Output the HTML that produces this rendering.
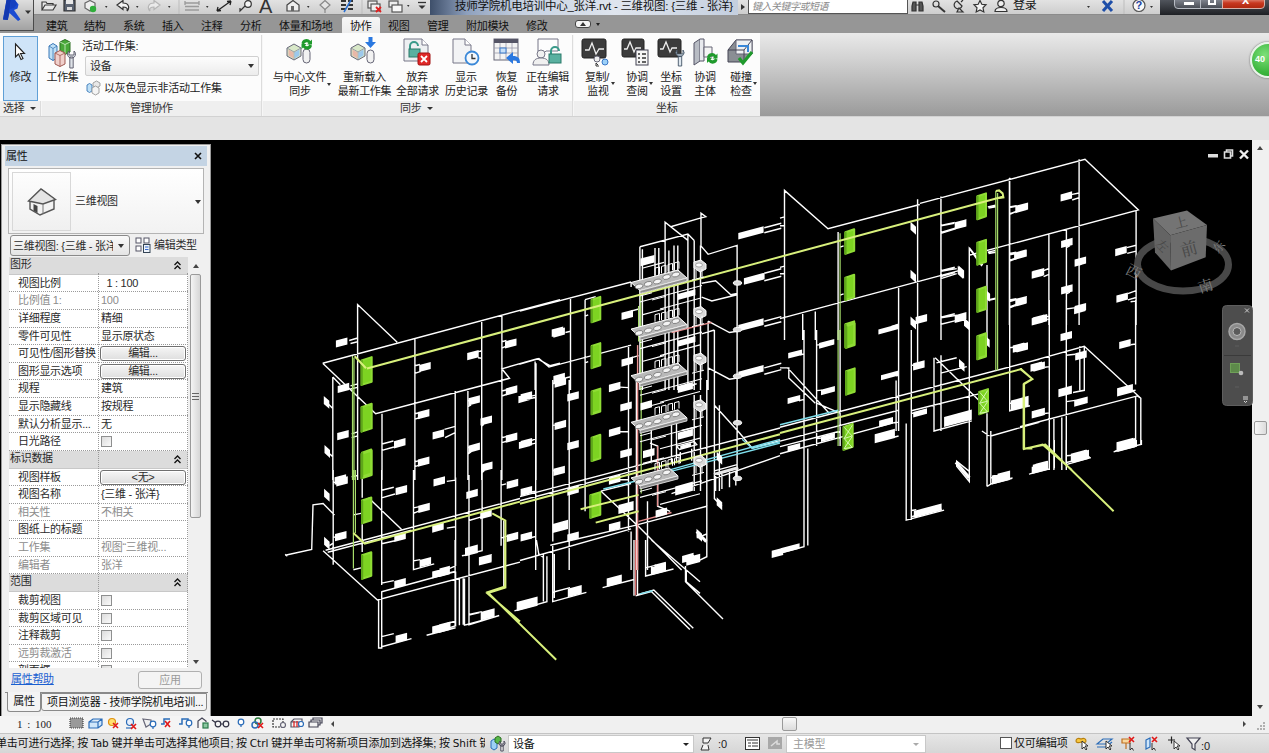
<!DOCTYPE html>
<html><head><meta charset="utf-8"><title>Revit</title>
<style>
*{box-sizing:border-box;margin:0;padding:0}
html,body{width:1269px;height:753px;overflow:hidden;background:#e9e9e9}
body{font-family:"Liberation Sans","Noto Sans CJK SC",sans-serif;font-size:12px;color:#2a2a2a;position:relative}
.abs{position:absolute}
svg{position:absolute;overflow:visible}
#qat{left:0;top:0;width:1269px;height:15px;background:linear-gradient(#e2e2e2,#cdcdcd);border-bottom:1px solid #8b8b8b}
#tabs{left:0;top:15px;width:1269px;height:18px;background:#969696;}
#tabs2 span{position:absolute;top:2px;font-size:11px;color:#111;white-space:nowrap;line-height:18px;letter-spacing:-0.3px}
#rbtn{left:0;top:0;width:34px;height:31px;background:linear-gradient(#dedede,#bdbdbd 55%,#a2a2a2);border-right:1px solid #4a4a4a;border-bottom:1px solid #4a4a4a}
#ribbon{left:0;top:33px;width:1269px;height:83px;background:linear-gradient(#e9e9e9,#cfcfcf 35%,#9a9a9a);}
#ribpan{left:0;top:33px;width:760px;height:83px;background:#fcfcfc}
#ribtitle{left:0;top:101px;width:760px;height:15px;background:#efefef}
.rt{position:absolute;top:101px;font-size:11px;line-height:15px;color:#333;white-space:nowrap;letter-spacing:-0.3px}
.rl{position:absolute;font-size:11px;line-height:14px;color:#222;white-space:nowrap;text-align:center;letter-spacing:-0.3px;transform:translateX(-50%)}
.sep{position:absolute;top:35px;width:2px;height:81px;background:#dcdcdc;border-right:1px solid #f6f6f6}
.dar{position:absolute;width:0;height:0;border:3px solid transparent;border-top:3px solid #333;border-bottom:0}
#optbar{left:0;top:116px;width:1269px;height:24px;background:#e4e4e4;border-top:1px solid #d2d2d2}
#view{left:0;top:140px;width:1252px;height:576px;background:#000}
#vscroll{left:1252px;top:140px;width:17px;height:576px;background:#f0f0f0}
#hscroll{left:0;top:716px;width:1269px;height:17px;background:#f0f0f0}
#status{left:0;top:733px;width:1269px;height:20px;background:#f0f0f0;border-top:1px solid #dcdcdc}
#props{left:1px;top:144px;width:210px;height:572px;background:#f0f0f0;border:1px solid #9a9a9a;border-bottom:0}
.pr{position:absolute;left:7px;width:179px;height:18px;border-bottom:1px dotted #9a9a9a;background:#fff;font-size:11px;line-height:16px;white-space:nowrap;letter-spacing:-0.3px;overflow:hidden}
.pr b{position:absolute;left:9px;top:0;font-weight:normal}
.pr i{position:absolute;left:92px;top:0;font-style:normal}
.pr.g{color:#8c8c8c}
.ph{position:absolute;left:7px;width:179px;height:18px;background:#dcdcdc;font-size:11px;line-height:15px;padding-left:1px;letter-spacing:-0.3px;border-bottom:1px solid #c8c8c8}
.ph:after{content:"\2303\2303";position:absolute;right:8px;top:0;font-size:0}
.chev{position:absolute;right:7px;top:4px;width:7px;height:9px}
.pbtn{position:absolute;left:91px;top:1px;width:86px;height:15px;border:1px solid #707070;border-radius:3px;background:linear-gradient(#f6f6f6,#dedede);text-align:center;line-height:13px;font-size:11px;box-shadow:inset 0 0 0 1px #fff}
.cb{position:absolute;left:92px;top:3px;width:11px;height:11px;border:1px solid #8e8f8f;background:linear-gradient(135deg,#dcdcdc,#fafafa)}
#sttxt em{font-style:normal;font-family:"DejaVu Sans",sans-serif;font-size:10.5px;letter-spacing:0}
</style></head><body>
<div id="qat" class="abs"></div>
<div id="tabs" class="abs"></div>
<div class="abs" style="left:342px;top:17px;width:38px;height:16px;background:linear-gradient(#f6f6f6,#ececec);border-radius:2px 2px 0 0"></div>
<div id="tabs2" class="abs" style="left:0;top:15px;width:700px;height:18px">
<span style="left:46px">建筑</span><span style="left:84px">结构</span><span style="left:123px">系统</span><span style="left:162px">插入</span><span style="left:201px">注释</span><span style="left:240px">分析</span><span style="left:279px">体量和场地</span><span style="left:350px">协作</span><span style="left:388px">视图</span><span style="left:427px">管理</span><span style="left:466px">附加模块</span><span style="left:526px">修改</span></div>
<div class="abs" style="left:575px;top:20px;width:16px;height:8px;background:#f4f4f4;border:1px solid #444;border-radius:3px"></div><div class="abs" style="left:580px;top:22px;border:3px solid transparent;border-bottom:4px solid #333;border-top:0"></div><div class="abs" style="left:596px;top:23px;border:2.5px solid transparent;border-top:3px solid #222;border-bottom:0"></div>
<div id="rbtn" class="abs"></div>
<svg style="left:0;top:0" width="34" height="31" viewBox="0 0 34 31"><path d="M6.500 0 L15 0 L18.500 4.500 L17.500 8.500 L14 10 L20.500 19.500 L18 21 L9.500 13 L7.800 20 L3 19.500 Z" fill="#1a4bd2"/><path d="M6.500 0 L11 0 L7.800 20 L3 19.500 Z" fill="#1238b0"/><path d="M11 0 L15 0 L17 4 L14 8 L10 9 Z" fill="#1440c0"/><path d="M25 10.500 L31 10.500 L28 14 Z" fill="#333"/></svg>
<!-- QAT icons -->
<svg style="left:36px;top:0" width="400" height="15" viewBox="36 0 400 15" fill="none" stroke="#3a3a3a" stroke-width="1.2">
<path d="M42 10 L42 2 L46 2 L47 3.5 L53 3.5 L53 5 M42 10 L45 5 L56 5 L53 10 Z" fill="#e8e8e8"/>
<path d="M64 0 H75 V11 H64 Z" fill="#5a6270" stroke="#333"/><rect x="66" y="0" width="7" height="4" fill="#e8e8e8" stroke="none"/><rect x="67" y="7" width="5" height="3" fill="#ddd" stroke="none"/>
<path d="M85 3 L90 0.5 L95 3 L95 8 L90 11 L85 8 Z" fill="#eee" stroke="#666"/><circle cx="93" cy="9" r="3.2" fill="#2fae3a" stroke="none"/>
<path d="M105 6 l2.5 0 l-1.25 2 z" fill="#333" stroke="none"/>
<path d="M117 5 L123 0.5 V3 C129 3 130 8 127 11 C128 8 126 7 123 7 V9.5 Z" fill="#f4f4f4" stroke="#333"/>
<path d="M136 6 l2.5 0 l-1.25 2 z" fill="#333" stroke="none"/>
<path d="M160 5 L154 0.5 V3 C148 3 147 8 150 11 C149 8 151 7 154 7 V9.5 Z" fill="#eaeaea" stroke="#b5b5b5"/>
<path d="M168 6 l2.5 0 l-1.25 2 z" fill="#333" stroke="none"/>
<path d="M179 0 V14" stroke="#bdbdbd" stroke-width="1"/>
<path d="M185 3 H199 M185 6.5 H199 M185 10 H199 M185 1 V5 M199 1 V5" stroke="#9a9a9a" stroke-width="1.3"/>
<path d="M206 6 l2.5 0 l-1.25 2 z" fill="#333" stroke="none"/>
<path d="M217 11 L231 1 M217 11 l1 -4 M217 11 l4 -0.5 M231 1 l-4 0.5 M231 1 l-1 4" stroke="#222" stroke-width="1.3"/>
<circle cx="248" cy="4" r="3.3" fill="#f4f4f4" stroke="#333"/><path d="M245 6 L240 11 V8" stroke="#333"/>
<path d="M176 0" />
</svg>
<div class="abs" style="left:259px;top:-4px;font-size:20px;line-height:20px;color:#333;font-family:'Liberation Sans',sans-serif">A</div>
<svg style="left:280px;top:0" width="160" height="15" viewBox="280 0 160 15" fill="none" stroke="#3a3a3a" stroke-width="1.2">
<path d="M287 5 L293 0.5 L299 5 V11 H287 Z" fill="#eee" stroke="#444"/><rect x="291" y="6" width="3" height="5" fill="#666" stroke="none"/>
<path d="M307 6 l2.5 0 l-1.25 2 z" fill="#333" stroke="none"/>
<path d="M320 5 l5 -4.5 l5 4.5 l-5 4.5 z" fill="#e4e4e4" stroke="#888"/><path d="M325 9 V13" stroke="#888"/>
<path d="M341 1 H355 M341 5 H355 M341 9 H355" stroke="#333" stroke-width="2.2" stroke-dasharray="5 2"/><path d="M344 12 L351 0" stroke="#2a6fd0" stroke-width="1.5"/>
<path d="M362 0 V14" stroke="#bdbdbd" stroke-width="1"/>
<rect x="368" y="1" width="9" height="7" fill="#eee" stroke="#555"/><rect x="371" y="4" width="9" height="7" fill="#eee" stroke="#555"/><path d="M376 7 l5 5 M381 7 l-5 5" stroke="#e02020" stroke-width="1.8"/>
<rect x="389" y="1" width="9" height="6" fill="#eee" stroke="#555"/><rect x="392" y="5" width="10" height="7" fill="#f8f8f8" stroke="#555"/>
<path d="M407 5 l2.5 0 l-1.25 2 z" fill="#333" stroke="none"/>
<path d="M418 2.5 H426" stroke="#333" stroke-width="1.3"/><path d="M418.5 5.5 l7 0 l-3.5 3.5 z" fill="#333" stroke="none"/>
</svg>
<!-- title -->
<div class="abs" style="left:430px;top:0;width:308px;height:15px;background:linear-gradient(90deg,#3e4f6a,#8ea0bd 12%,#c7d2e2 30%,#dfe5ee 60%,#c4cfdf);overflow:hidden"><div style="position:absolute;left:25px;top:-3px;font-size:11.5px;line-height:18px;white-space:nowrap;color:#111;letter-spacing:-0.26px" id="ttl">技师学院机电培训中心_张洋.rvt - 三维视图: {三维 - 张洋}</div></div>
<div class="abs" style="left:741px;top:4px;border:3.5px solid transparent;border-left:4px solid #333;border-right:0"></div>
<div class="abs" style="left:748px;top:-1px;width:160px;height:15px;background:#fff;border:1px solid #555"><div style="position:absolute;left:3px;top:-1px;font-size:10px;line-height:15px;font-style:italic;color:#8a8a8a;white-space:nowrap;letter-spacing:-0.5px">键入关键字或短语</div></div>
<svg style="left:908px;top:0" width="250" height="15" viewBox="908 0 250 15" fill="none" stroke="#333" stroke-width="1.2">
<path d="M913 2 h3 v9 h-4 v-5 z M919 2 h3 l1 4 v5 h-4 z M916 5 h3" fill="#555"/>
<circle cx="936" cy="4" r="3" /><path d="M938 6 L945 12" stroke-width="2"/>
<path d="M957 1 a4 4 0 1 0 5 5 z M959 8 l-2 4 h6 z M961 2 l2 -2" />
<path d="M980 0.5 l1.8 3.8 l4.2 0.5 l-3 3 l0.8 4.2 l-3.800 -2 l-3.8 2 l0.8 -4.200 l-3 -3 l4.200 -0.500 z" fill="#f4f4f4"/>
<circle cx="1001" cy="3.500" r="3.200" fill="#eee"/><path d="M995 11.500 c0 -3 3 -4 6 -4 c3 0 6 1 6 4 z" fill="#eee"/>
<path d="M1087 6 l3 0 l-1.500 2 z" fill="#333" stroke="none"/>
<path d="M1103 1 l9 10 M1112 1 l-9 10" stroke="#1e4ea8" stroke-width="3"/>
<path d="M1124 0 V14" stroke="#bdbdbd" stroke-width="1"/>
<circle cx="1139" cy="5.500" r="6" fill="#f8f8f8" stroke="#555"/>
<path d="M1150 6 l3 0 l-1.500 2 z" fill="#333" stroke="none"/>
</svg>
<div class="abs" style="left:1135.500px;top:-1px;font-size:11px;font-weight:bold;color:#1a3fa0;line-height:13px">?</div>
<div class="abs" style="left:1013px;top:-3px;font-size:12px;line-height:17px;color:#111;letter-spacing:-0.3px">登录</div>
<div class="abs" style="left:1160px;top:0;width:109px;height:15px;background:linear-gradient(#50545c,#1e2024)"></div>
<div class="abs" style="left:1174px;top:-3px;width:27px;height:12px;border:1px solid #b8bcc4;border-radius:0 0 0 4px;background:linear-gradient(#8a8f99,#4a4e56)"></div>
<div class="abs" style="left:1200px;top:-3px;width:23px;height:12px;border:1px solid #b8bcc4;background:linear-gradient(#8a8f99,#4a4e56)"></div>
<div class="abs" style="left:1222px;top:-3px;width:43px;height:12px;border:1px solid #d8b0a8;border-radius:0 0 4px 0;background:linear-gradient(#e8a090,#c83820 50%,#b02810)"></div>
<div class="abs" style="left:1184px;top:2px;width:10px;height:3px;background:#fff"></div>
<div class="abs" style="left:1208px;top:0;width:8px;height:5px;border:2px solid #fff;border-top:0"></div>
<div class="abs" style="left:1242px;top:-7px;font-size:13px;font-weight:bold;color:#fff;line-height:14px;font-family:'Liberation Sans',sans-serif">x</div>
<div id="ribbon" class="abs"></div>
<div id="ribpan" class="abs"></div>
<div id="ribtitle" class="abs"></div>
<div id="optbar" class="abs"></div>
<!-- modify button -->
<div class="abs" style="left:3px;top:36px;width:35px;height:65px;background:#cfe4f8;border:1px solid #5f9fd6"></div>
<svg style="left:14px;top:43px" width="12" height="18" viewBox="0 0 12 18"><path d="M1.500 1 V14 L4.500 11 L7 16.500 L9 15.500 L6.500 10.500 H10.500 Z" fill="#fff" stroke="#222" stroke-width="1.100"/></svg>
<div class="rl" style="left:20.500px;top:70px">修改</div>
<div class="rt" style="left:3px">选择</div><div class="dar" style="left:30px;top:107px"></div>
<div class="sep" style="left:40px;top:101px;height:15px"></div>
<!-- worksets icon -->
<svg style="left:46px;top:38px" width="32" height="32" viewBox="0 0 32 32">
<path d="M3 8 l4 -2.500 l4 2.500 v12 l-4 2.500 l-4 -2.500 z" fill="#bfe0f6" stroke="#3a78b8"/><path d="M3 8 l4 2.500 l4 -2.500 M7 10.500 v12" fill="none" stroke="#3a78b8" stroke-width=".8"/>
<path d="M14 4 l5 -2.500 l5 2.500 v10 l-5 2.500 l-5 -2.500 z" fill="#48a838" stroke="#2c6e22"/><path d="M14 4 l5 2.500 l5 -2.500 M19 6.500 v10" fill="none" stroke="#d6f0d0" stroke-width=".8"/>
<path d="M9 15 l5 -2.500 l5 2.500 v11 l-5 2.500 l-5 -2.500 z" fill="#f0d0cc" stroke="#a05850"/><path d="M9 15 l5 2.500 l5 -2.500 M14 17.500 v11" fill="none" stroke="#a05850" stroke-width=".8"/>
<path d="M23 13 a4 4 0 1 0 5 0 v4 h-5 z M23.800 19 h3.400 v11 h-3.400 z" fill="#dfe3e8" stroke="#556" stroke-width=".9"/>
</svg>
<div class="rl" style="left:62.500px;top:70px">工作集</div>
<div class="abs" style="left:82px;top:39px;font-size:11px;line-height:14px;white-space:nowrap;letter-spacing:-0.3px;color:#222">活动工作集:</div>
<div class="abs" style="left:85px;top:56px;width:174px;height:20px;border:1px solid #d0d0d0;background:linear-gradient(#fdfdfd,#ececec);border-radius:2px"><div style="position:absolute;left:4px;top:2px;font-size:11px;line-height:14px;letter-spacing:-0.3px">设备</div><div class="dar" style="right:4px;top:7px;border-width:3.500px;border-top-width:4px"></div></div>
<svg style="left:86px;top:80px" width="16" height="16" viewBox="0 0 16 16"><path d="M1 5 l2.500 -1.500 l2.500 1.500 v6 l-2.500 1.500 l-2.500 -1.500 z" fill="#bfe0f6" stroke="#3a78b8" stroke-width=".9"/><path d="M7 3 l3.500 -2 l3.500 2 v3 l-3.500 2 l-3.500 -2 z" fill="#e8e8e8" stroke="#999" stroke-width=".9"/><path d="M6 8 l3.500 -2 l3.500 2 v5 l-3.500 2 l-3.500 -2 z" fill="#f4f4f4" stroke="#999" stroke-width=".9"/></svg>
<div class="abs" style="left:104px;top:81px;font-size:11px;line-height:14px;white-space:nowrap;letter-spacing:-0.300px;color:#222">以灰色显示非活动工作集</div>
<div class="rt" style="left:130px">管理协作</div>
<div class="sep" style="left:261px"></div>
<!-- sync panel -->
<svg style="left:284px;top:36px" width="30" height="30" viewBox="0 0 30 30">
<path d="M3 12 l7 -4 l7 4 v8 l-7 4 l-7 -4 z" fill="#d8e8c8" stroke="#667"/><path d="M3 12 l7 4 l7 -4 M10 16 v8" fill="none" stroke="#889" stroke-width=".8"/><path d="M4.500 13.500 l5 3 v6 l-5 -3 z" fill="#e8b8a8"/><path d="M10.500 16.500 l5 -3 v6 l-5 3 z" fill="#9cc8ec"/>
<rect x="19" y="13" width="7" height="14" rx="3.500" fill="#f2f2f2" stroke="#667"/>
<path d="M17.500 7.500 a5 5 0 0 1 9 -2.500 l1.500 -1.500 v5 h-5 l1.500 -1.500 a2.800 2.800 0 0 0 -4.500 1.500 z M28 9.500 a5 5 0 0 1 -9 2 l-1.500 1.500 v-5 h5 l-1.500 1.500 a2.800 2.800 0 0 0 4.500 -1 z" fill="#1f9a2c"/>
</svg>
<div class="rl" style="left:299.500px;top:70px">与中心文件</div><div class="rl" style="left:300px;top:84px">同步</div><div class="dar" style="left:327px;top:83px;border-width:2.500px;border-top-width:3px"></div>
<svg style="left:348px;top:36px" width="32" height="30" viewBox="0 0 32 30">
<path d="M3 12 l7 -4 l7 4 v8 l-7 4 l-7 -4 z" fill="#d8e8c8" stroke="#667"/><path d="M3 12 l7 4 l7 -4 M10 16 v8" fill="none" stroke="#889" stroke-width=".8"/><path d="M4.500 13.500 l5 3 v6 l-5 -3 z" fill="#e8b8a8"/><path d="M10.500 16.500 l5 -3 v6 l-5 3 z" fill="#9cc8ec"/>
<rect x="19" y="14" width="7" height="13" rx="3.500" fill="#f2f2f2" stroke="#667"/>
<path d="M20.500 1 h4 v5 h3.500 l-5.500 6 l-5.500 -6 h3.500 z" fill="#2a78e0"/>
</svg>
<div class="rl" style="left:364.500px;top:70px">重新载入</div><div class="rl" style="left:364.500px;top:84px">最新工作集</div>
<svg style="left:402px;top:37px" width="32" height="30" viewBox="0 0 32 30">
<path d="M2 2 h18 l6 6 v16 h-24 z" fill="#eef0f2" stroke="#778"/><path d="M20 2 v6 h6" fill="#fff" stroke="#778"/>
<path d="M8 12 v-3 a4 4 0 0 1 8 0" fill="none" stroke="#3a9a8a" stroke-width="2"/><rect x="7" y="12" width="11" height="8" fill="#5ab0a0" stroke="#2a7a6a"/>
<rect x="16" y="16" width="12" height="12" rx="1.500" fill="#e02828" stroke="#a01010"/><path d="M19 19 l6 6 M25 19 l-6 6" stroke="#fff" stroke-width="1.800"/>
</svg>
<div class="rl" style="left:417px;top:70px">放弃</div><div class="rl" style="left:417.500px;top:84px">全部请求</div>
<svg style="left:451px;top:37px" width="32" height="30" viewBox="0 0 32 30">
<path d="M2 2 h12 l6 6 v18 h-18 z" fill="#f2f3f5" stroke="#778"/><path d="M14 2 v6 h6" fill="#fff" stroke="#778"/>
<circle cx="21" cy="21" r="6.500" fill="#f4f8fc" stroke="#3a88d8" stroke-width="1.800"/><path d="M21 17 v4.500 h3.500" fill="none" stroke="#333" stroke-width="1.300"/>
</svg>
<div class="rl" style="left:466px;top:70px">显示</div><div class="rl" style="left:466.500px;top:84px">历史记录</div>
<svg style="left:492px;top:37px" width="30" height="30" viewBox="0 0 30 30">
<rect x="2" y="2" width="24" height="21" fill="#f4f4f4" stroke="#667"/><rect x="2" y="2" width="24" height="4" fill="#556"/><path d="M2 11 h24 M2 16 h24 M8 6 v17 M14 6 v17 M20 6 v17" stroke="#99a" stroke-width=".8"/><rect x="8" y="11" width="6" height="5" fill="#c8e0f8" stroke="#3a78c8"/>
<path d="M14 21 l7 -6 v4 c5 0 7 2 7 7 h-3 c0 -2 -1 -3 -4 -3 v4 z" fill="#2a78e0"/>
</svg>
<div class="rl" style="left:506.500px;top:70px">恢复</div><div class="rl" style="left:506.500px;top:84px">备份</div>
<svg style="left:532px;top:37px" width="32" height="30" viewBox="0 0 32 30">
<path d="M6 2 h20 v12 h-12 l-4 4 v-4 h-4 z" fill="#fdfdfd" stroke="#778"/>
<circle cx="9" cy="17" r="4" fill="#f0f0f0" stroke="#778"/><path d="M1 28 c0 -5 3 -7 8 -7 c5 0 8 2 8 7 z" fill="#f0f0f0" stroke="#778"/>
<path d="M19 17 v-3 a4 4 0 0 1 8 0" fill="none" stroke="#3a9a8a" stroke-width="2"/><rect x="17" y="17" width="12" height="9" fill="#5ab0a0" stroke="#2a7a6a"/>
</svg>
<div class="rl" style="left:547.500px;top:70px">正在编辑</div><div class="rl" style="left:548px;top:84px">请求</div>
<div class="rt" style="left:400px">同步</div><div class="dar" style="left:427px;top:107px"></div>
<div class="sep" style="left:572px"></div>
<!-- coord panel -->
<svg style="left:581px;top:38px" width="30" height="30" viewBox="0 0 30 30">
<rect x="1" y="1" width="24" height="19" rx="2" fill="#3c3c3c" stroke="#222"/><path d="M4 12 h4 l3 -7 l4 11 l3 -5 h5" fill="none" stroke="#eee" stroke-width="1.300"/>
<circle cx="16" cy="21" r="3" fill="#eee" stroke="#667"/><circle cx="24" cy="24" r="3" fill="#9cd0f8" stroke="#3a78c8"/><path d="M17 27 l-2 -2 M15 25 v3 h3" fill="none" stroke="#333"/>
</svg>
<div class="rl" style="left:597px;top:70px">复制/</div><div class="rl" style="left:598px;top:84px">监视</div><div class="dar" style="left:611px;top:82px;border-width:2.500px;border-top-width:3px"></div>
<svg style="left:621px;top:38px" width="32" height="30" viewBox="0 0 32 30">
<rect x="1" y="1" width="22" height="18" rx="2" fill="#3c3c3c" stroke="#222"/><path d="M3 11 h3 l3 -7 l4 10 l2 -4 h5" fill="none" stroke="#eee" stroke-width="1.300"/>
<rect x="15" y="12" width="12" height="15" fill="#f6f6f6" stroke="#445"/><path d="M17 16 h2 M21 16 h4 M17 20 h2 M21 20 h4 M17 24 h2 M21 24 h4" stroke="#333" stroke-width="1.300"/>
</svg>
<div class="rl" style="left:637px;top:70px">协调</div><div class="rl" style="left:637px;top:84px">查阅</div><div class="dar" style="left:649px;top:82px;border-width:2.500px;border-top-width:3px"></div>
<svg style="left:657px;top:38px" width="32" height="30" viewBox="0 0 32 30">
<rect x="1" y="1" width="23" height="18" rx="2" fill="#3c3c3c" stroke="#222"/><path d="M3 11 h3 l3 -7 l4 10 l2 -4 h5" fill="none" stroke="#eee" stroke-width="1.300"/>
<path d="M20 12 a4 4 0 1 0 6 0 v4 h-6 z M21.300 18 h3.400 v10 h-3.400 z" fill="#dfe8f0" stroke="#456" stroke-width=".9"/>
</svg>
<div class="rl" style="left:671px;top:70px">坐标</div><div class="rl" style="left:671px;top:84px">设置</div>
<svg style="left:691px;top:38px" width="32" height="30" viewBox="0 0 32 30">
<path d="M3 5 l6 -4 v22 l-6 4 z" fill="#b8bcc4" stroke="#556"/><path d="M9 1 h4 v22 h-4" fill="#e8eaee" stroke="#556"/><path d="M13 9 h8 v10 h-8 z" fill="#f4f4f4" stroke="#667"/>
<path d="M16 19.500 a5 5 0 0 1 9 -2.500 l1.500 -1.500 v5 h-5 l1.500 -1.500 a2.800 2.800 0 0 0 -4.500 1.500 z M26.500 21.500 a5 5 0 0 1 -9 2 l-1.500 1.500 v-5 h5 l-1.500 1.500 a2.800 2.800 0 0 0 4.500 -1 z" fill="#1f9a2c"/>
</svg>
<div class="rl" style="left:705px;top:70px">协调</div><div class="rl" style="left:705px;top:84px">主体</div>
<svg style="left:726px;top:38px" width="32" height="30" viewBox="0 0 32 30">
<path d="M2 12 l8 -10 h16 v14 l-8 8 h-16 z" fill="#8a8e94" stroke="#445"/><path d="M10 2 h16 v14 h-16 z" fill="#f0f2f4" stroke="#667"/><path d="M2 12 h16 v12 M18 12 l8 -10" fill="none" stroke="#445"/><path d="M12 8 h10 v6" fill="none" stroke="#3a88d8" stroke-width="2"/>
<path d="M13 20 l4 5 l9 -11" fill="none" stroke="#1f9a2c" stroke-width="3.200"/>
</svg>
<div class="rl" style="left:741px;top:70px">碰撞</div><div class="rl" style="left:741px;top:84px">检查</div><div class="dar" style="left:753px;top:82px;border-width:2.500px;border-top-width:3px"></div>
<div class="rt" style="left:656px">坐标</div>
<!-- green ball -->
<div class="abs" style="left:1250px;top:42px;width:36px;height:36px;border-radius:50%;background:radial-gradient(circle at 40% 35%,#7de07a,#3cb63e 60%,#2a9a2e);border:2px solid #e8f4e8;box-shadow:0 0 2px #555"></div>
<div class="abs" style="left:1255px;top:54px;font-size:9px;font-weight:bold;color:#fff;line-height:10px">40</div>
<div id="view" class="abs"></div>
<div id="vscroll" class="abs"></div>
<div id="hscroll" class="abs"></div>
<div id="status" class="abs"></div>
<svg style="left:0;top:0" width="1269" height="753" viewBox="0 0 1269 753" fill="none" stroke="#fff" stroke-width="1.4">
<clipPath id="vc"><rect x="212" y="140" width="1040" height="576"/></clipPath><g clip-path="url(#vc)">
<path d="M357.6 357.7 L357.6 304.6 L397.2 342.3 M322.7 363.2 L560.0 299.6 M322.7 363.2 L375.7 413.7 L509.5 378.3 L501.9 368.8 L537.3 358.7 L549.9 365.7 L560.0 363.2 M414.9 339.2 L414.9 480.1 M481.7 320.3 L481.7 480.1 M501.9 315.2 L501.9 480.1 M382.0 413.7 L382.0 480.1 M455.2 391.0 L455.2 480.1 M467.9 391.0 L467.9 480.1 M332.8 377.1 L332.8 480.1 M357.6 357.7 L357.6 480.1 M349.2 340.5 L357.6 338.0 M350.5 343.5 L357.6 341.7 M350.5 385.9 L357.6 383.9 M350.5 389.0 L357.6 387.4 M332.8 377.1 L340.4 384.7 M332.8 408.6 L327.8 403.6 M332.8 456.6 L328.3 452.8 M414.9 365.7 L419.9 364.5 M414.9 373.3 L420.7 371.3 M481.7 350.6 L478.0 351.8 M481.7 358.2 L478.0 357.7 M501.9 348.1 L506.5 346.0 M501.9 341.7 L506.5 340.5 M414.9 413.7 L419.1 412.7 M414.9 419.2 L419.9 417.5 M455.2 426.3 L444.4 429.3 M455.2 432.6 L445.1 437.7 M382.0 444.0 L393.4 441.0 M382.0 450.3 L393.9 447.0 M467.9 401.1 L470.4 400.3 M467.9 406.6 L471.1 404.9 M481.7 418.7 L483.0 418.7 M481.7 426.3 L483.8 424.3 M501.9 391.0 L507.0 389.7 M501.9 396.0 L507.5 394.0 M536.0 363.2 L536.0 397.3 M536.0 397.3 L528.4 399.0 M501.9 437.7 L507.0 436.4 M501.9 442.7 L507.5 441.0 M467.9 447.8 L470.4 447.0 M467.9 454.1 L471.1 451.6 M481.7 466.7 L483.8 465.4 M481.7 473.0 L484.3 470.5 M414.9 461.7 L419.1 460.6 M414.9 466.7 L419.9 464.9 M351.7 433.9 L357.6 431.9 M351.7 437.7 L357.6 435.9 M351.7 476.8 L357.6 475.5 M536.0 438.9 L528.4 441.5 M536.0 397.3 L536.0 480.1 M333.2 470.0 L333.2 564.7 M381.7 470.0 L381.7 584.9 M413.5 470.0 L413.5 569.7 L434.2 563.9 M455.6 477.6 L455.6 565.9 M469.0 475.0 L469.0 624.0 M482.1 470.0 L482.1 550.8 L470.8 553.3 M501.1 470.0 L501.1 545.7 M503.8 520.5 L503.8 588.6 M378.6 600.0 L378.6 648.0 L381.7 648.0 L381.7 591.2 M455.6 571.5 L455.6 626.5 M459.4 578.5 L459.4 625.2 M464.5 578.5 L464.5 625.2 L469.0 624.0 M325.6 550.3 L520.0 498.5 M327.7 552.3 L411.5 530.1 M323.1 550.8 L377.4 600.0 L520.0 562.1 M333.2 564.7 L333.2 553.3 M381.7 591.7 L455.6 571.5 M285.2 555.3 L311.7 549.5 L313.0 504.8 L323.1 503.6 L334.5 514.9 M285.2 554.3 L287.3 556.3 M368.5 497.8 L401.4 529.3 M381.7 636.6 L393.8 633.6 M381.7 646.7 L411.5 638.6 M455.6 621.0 L444.3 624.5 M426.6 635.3 L455.6 627.8 M469.0 615.1 L479.6 612.6 M469.0 624.0 L498.5 615.9 M381.7 490.2 L393.8 487.2 M381.7 497.8 L395.0 494.0 M413.5 507.9 L419.5 506.6 M413.5 513.4 L420.3 510.4 M455.6 480.1 L446.8 481.4 M381.7 537.7 L393.8 535.1 M381.7 543.7 L395.0 540.7 M455.6 526.8 L446.8 528.1 M381.7 583.1 L393.8 580.6 M413.5 560.9 L420.3 559.6 M455.6 565.9 L446.8 569.7 M469.0 494.0 L467.5 495.2 M469.0 520.5 L482.1 516.7 M469.0 550.3 L465.0 551.3 M461.9 555.8 L469.0 554.6 M501.1 485.1 L506.1 483.9 M501.1 538.2 L506.9 536.1 M333.2 482.6 L335.7 482.1 M333.2 537.7 L335.2 536.9 M333.2 543.2 L329.4 545.7 M362.2 477.6 L362.2 497.8 M362.2 524.3 L362.2 552.0 M353.4 514.9 L361.0 513.4 M353.4 569.7 L361.0 567.9 M520.0 311.1 L631.1 282.0 M570.5 297.2 L570.5 390.1 M585.1 299.7 L585.1 390.1 M585.1 299.7 L595.7 296.7 M520.0 364.1 L538.9 358.5 L549.0 367.1 L631.1 345.1 M665.1 250.5 L665.1 222.2 L687.9 240.4 M671.5 226.5 L701.0 217.9 L705.8 216.7 L701.0 213.1 L701.0 245.4 M639.9 246.7 L687.9 234.1 L694.2 240.4 M639.9 246.7 L639.9 390.1 M642.4 249.2 L642.4 390.1 M687.9 234.1 L687.9 390.1 M694.2 240.4 L694.2 390.1 M700.5 245.4 L700.5 390.1 M665.1 250.5 L665.1 390.1 M668.9 250.5 L668.9 390.1 M674.0 245.4 L674.0 390.1 M677.8 245.4 L677.8 390.1 M655.0 248.0 L655.0 283.3 M658.8 248.0 L658.8 283.3 M700.5 245.4 L708.1 254.3 L737.1 245.4 L737.1 390.1 M764.3 227.8 L781.3 223.2 M764.3 273.2 L781.3 268.7 M764.3 321.2 L781.3 316.6 M764.3 367.9 L781.3 363.3 M764.3 232.8 L781.3 228.3 M764.3 280.8 L781.3 276.2 M764.3 326.2 L781.3 321.7 M764.3 374.2 L781.3 369.6 M701.7 283.3 L715.6 280.8 L730.8 294.7 L737.1 293.4 M701.7 297.2 L711.8 301.0 L737.1 294.7 M708.1 321.2 L729.5 332.5 L737.1 331.3 M701.7 333.8 L714.4 330.0 M708.1 367.9 L729.5 379.2 L737.1 378.0 M708.1 321.2 L708.1 390.1 M714.4 330.0 L714.4 390.1 M570.5 331.3 L565.4 332.5 M570.5 376.7 L565.4 378.0 M585.1 316.1 L588.2 314.9 M585.1 362.8 L588.2 361.6 M631.1 311.1 L638.6 309.0 M631.1 357.8 L638.6 355.7 M631.1 282.0 L631.1 287.1 M535.1 361.6 L535.1 390.1 M628.5 345.1 L628.5 390.1 M535.7 380.0 L535.7 570.1 M552.8 380.0 L552.8 541.6 M569.2 380.0 L569.2 570.1 M585.1 380.0 L585.1 511.3 M628.5 385.0 L628.5 531.5 M520.0 496.6 L780.0 428.0 M671.5 493.6 L780.0 455.7 M520.0 500.7 L636.1 470.1 M520.0 560.5 L631.1 528.9 M550.3 545.3 L636.1 525.1 L706.8 506.2 L706.8 556.7 L696.7 561.7 M706.8 380.0 L706.8 506.2 M638.6 526.4 L681.6 570.1 M600.8 491.1 L641.2 528.9 M600.8 491.1 L631.1 483.5 M647.5 501.2 L647.5 570.1 M631.1 531.5 L631.1 570.1 M714.4 380.0 L714.4 498.6 L721.9 506.2 M719.4 405.2 L719.4 491.1 M737.1 380.0 L737.1 481.0 M714.4 405.2 L739.6 433.0 L752.2 448.2 L780.0 440.6 M535.7 395.1 L530.1 396.4 M535.7 443.1 L530.1 444.4 M535.7 491.1 L530.1 492.3 M535.7 536.5 L530.1 537.8 M552.8 383.8 L557.9 382.5 M569.2 395.1 L571.7 395.7 M552.8 425.4 L557.9 424.9 M569.2 444.4 L571.7 445.1 M552.8 470.9 L557.4 470.4 M569.2 489.8 L571.7 490.6 M552.8 527.7 L557.9 526.4 M569.2 535.2 L571.7 536.5 M628.5 387.6 L619.7 387.1 M628.5 405.2 L627.3 405.7 M628.5 431.7 L619.7 431.7 M628.5 453.2 L627.3 453.2 M628.5 479.7 L619.7 479.7 M628.5 507.5 L627.3 507.5 M650.0 443.1 L657.6 446.1 L657.6 506.2 L670.2 511.3 M681.6 430.5 L696.7 426.7 M681.6 387.6 L696.7 383.8 M706.8 534.0 L696.7 537.8 M714.4 470.9 L737.1 464.6 M716.9 474.7 L738.3 468.3 M671.5 417.9 L671.5 463.3 M676.5 415.3 L676.5 463.3 M651.3 420.4 L651.3 463.3 M694.2 395.1 L694.2 491.1 M700.5 395.1 L700.5 491.1 M636.4 380.0 L636.4 570.1 M784.5 340.1 L784.5 190.4 L828.0 228.8 L919.8 204.5 M780.0 318.6 L961.7 269.9 M969.3 340.1 L969.3 248.4 L981.9 266.1 M917.6 199.2 L917.6 340.1 M941.0 196.7 L941.0 340.1 M1009.7 177.8 L1009.7 340.1 M898.6 286.3 L898.6 340.1 M802.7 314.1 L802.7 340.1 M815.3 311.6 L815.3 340.1 M987.0 264.9 L987.0 340.1 M838.1 232.0 L838.1 340.1 M941.0 225.7 L954.2 223.2 M941.0 233.3 L955.4 228.8 M1009.7 207.6 L1017.3 206.0 M1009.7 214.4 L1018.5 210.6 M1009.7 254.8 L1016.0 253.5 M1009.7 261.1 L1017.3 258.0 M1009.7 301.5 L1017.3 299.4 M1009.7 307.8 L1017.8 304.5 M941.0 271.2 L956.7 268.6 M941.0 278.7 L956.7 273.7 M941.0 317.9 L956.7 315.3 M941.0 324.2 L956.7 320.4 M917.6 319.1 L918.8 319.1 M898.6 324.2 L891.1 326.7 M780.0 218.2 L784.5 216.9 M780.0 267.4 L784.5 266.1 M780.0 225.7 L784.5 225.7 M780.0 273.7 L784.5 273.7 M840.1 247.2 L843.6 245.9 M840.1 295.1 L843.6 293.9 M988.5 208.1 L995.8 206.8 M988.5 253.5 L995.8 252.2 M988.5 300.2 L995.8 298.9 M920.0 203.4 L1085.0 159.3 L1138.4 209.9 L970.0 255.0 M1136.1 209.9 L1136.1 324.9 M1079.1 159.3 L1079.1 324.9 M1066.4 229.0 L1066.4 324.9 M1009.4 177.9 L1009.4 324.9 M1048.9 234.8 L1048.9 324.9 M940.9 196.5 L940.9 324.9 M969.3 247.6 L969.3 324.9 M969.3 247.6 L982.7 265.0 M1079.1 193.0 L1071.0 194.6 M1079.1 197.6 L1072.2 200.0 M1009.4 206.9 L1016.4 205.8 M1009.4 213.9 L1017.6 210.9 M940.9 225.5 L954.8 222.5 M940.9 232.5 L956.0 227.8 M1009.4 253.4 L1016.4 252.2 M1009.4 260.4 L1017.6 257.3 M1009.4 299.9 L1016.4 298.7 M1009.4 306.8 L1017.6 303.8 M1048.9 268.5 L1043.1 270.8 M1048.9 274.3 L1043.6 276.6 M1048.9 316.1 L1043.1 317.7 M1066.4 241.8 L1068.7 241.3 M1066.4 247.6 L1069.9 245.7 M1079.1 259.2 L1080.3 259.2 M1079.1 265.0 L1081.5 263.8 M1066.4 288.2 L1068.7 287.5 M1066.4 294.0 L1069.9 292.2 M1079.1 305.7 L1080.3 305.7 M1079.1 311.5 L1081.5 310.3 M1136.1 245.3 L1126.8 247.6 M1136.1 251.1 L1127.2 253.4 M1136.1 290.6 L1127.9 293.6 M1136.1 297.5 L1127.9 299.9 M940.9 270.8 L954.8 267.3 M940.9 276.6 L954.8 272.7 M940.9 317.3 L954.8 313.8 M987.8 206.9 L995.5 205.3 M987.8 252.2 L995.5 250.4 M987.8 299.9 L995.5 298.2 M780.0 427.2 L1040.0 359.0 M780.0 441.1 L898.6 410.3 M911.3 410.8 L981.9 393.1 M780.0 453.7 L896.1 422.1 M780.0 446.6 L840.6 431.0 M804.0 330.0 L804.0 520.1 M807.8 448.6 L807.8 520.1 M816.6 330.0 L816.6 446.1 M840.1 330.0 L840.1 446.1 M898.6 330.0 L898.6 431.0 M896.1 380.5 L896.1 431.0 M911.3 330.0 L911.3 520.1 M906.2 423.4 L906.2 520.1 M917.6 330.0 L917.6 362.8 M941.0 355.2 L941.0 431.0 M934.0 357.8 L934.0 431.0 L971.8 420.9 M969.3 330.0 L969.3 481.5 L956.7 466.3 L956.7 461.3 L969.3 471.4 M987.0 413.3 L987.0 486.5 M990.8 431.0 L990.8 484.0 L987.0 486.5 M1009.7 330.0 L1009.7 410.8 L1029.9 405.7 M935.2 357.8 L981.9 403.2 M787.6 367.9 L829.2 413.3 M816.6 403.2 L840.6 413.3 M780.0 367.9 L788.8 367.9 L788.8 378.0 L815.3 403.2 M990.8 436.0 L1040.0 422.1 M981.9 431.0 L989.5 436.0 M936.5 362.8 L956.7 357.8 M941.6 372.9 L966.8 366.6 M816.6 345.1 L820.4 344.6 M816.6 390.6 L821.7 390.1 M804.0 354.0 L800.2 354.7 M804.0 399.4 L798.9 400.7 M804.0 447.4 L798.9 448.6 M911.3 365.3 L913.8 365.3 M898.6 375.4 L896.1 375.9 M898.6 422.1 L892.3 422.9 M911.3 413.3 L913.8 413.3 M898.6 436.0 L893.6 437.3 M816.6 438.5 L821.7 438.0 M1009.7 347.7 L1013.5 347.2 M1009.7 403.2 L1012.2 403.2 M990.8 477.7 L993.3 477.7 M990.8 484.0 L1012.2 478.4 M911.3 516.8 L941.6 509.2 M911.3 510.5 L916.3 509.7 M1029.9 473.9 L1040.0 471.4 M1135.6 300.0 L1135.6 384.6 M1049.3 300.0 L1049.3 470.0 M1066.3 300.0 L1066.3 470.0 M1020.0 364.3 L1084.3 346.3 L1140.8 398.2 L1140.8 444.5 L1114.8 451.2 M1020.0 426.8 L1137.4 395.9 L1140.8 398.2 M1135.6 397.1 L1135.6 445.6 M1079.8 346.3 L1079.8 390.3 M1084.3 346.3 L1084.3 390.3 L1073.0 392.5 M1053.9 417.4 L1053.9 470.0 M1061.8 417.4 L1061.8 470.0 M1135.6 301.1 L1130.6 301.8 M1135.6 344.0 L1130.6 344.7 M1135.6 390.3 L1130.6 391.0 M1049.3 319.2 L1047.1 319.4 M1049.3 366.6 L1044.8 367.3 M1049.3 412.9 L1044.8 413.5 M1066.3 309.0 L1074.2 307.9 M1066.3 355.3 L1075.3 354.2 M1066.3 401.6 L1075.3 400.4 M1066.3 455.7 L1073.0 455.3 M1066.3 462.5 L1090.0 456.9 M1066.3 336.1 L1068.5 336.1 M1066.3 391.4 L1068.5 391.4 M455.1 540.0 L455.1 626.0 L440.0 630.6 M463.2 578.3 L463.2 624.8 M469.0 572.5 L469.0 624.8 L499.2 615.5 M543.4 553.9 L543.4 601.6 M546.9 556.3 L546.9 601.6 L514.4 610.9 M552.7 544.6 L552.7 601.6 L586.4 592.3 M554.3 553.9 L554.3 598.1 M634.0 540.0 L634.0 595.8 M637.5 540.0 L637.5 594.6 L653.8 590.0 L693.3 628.3 M645.6 540.0 L645.6 576.0 L673.5 569.0 M635.6 595.8 L651.4 591.6 L689.8 629.5 M602.6 587.6 L634.0 579.5 M686.3 570.2 L686.3 581.8 L700.0 593.4 M651.4 540.0 L700.0 581.8 M469.0 614.4 L481.8 611.6 M552.7 592.3 L570.1 587.6 M645.6 567.9 L656.1 565.1 M536.4 540.0 L538.7 553.9 L543.4 557.4 M440.0 574.9 L455.1 571.4 M804.0 500.0 L804.0 546.7 L780.0 553.0 M807.8 500.0 L807.8 545.4 M906.2 500.0 L906.2 520.2 L944.1 510.1 M911.3 500.0 L911.3 517.7 M1049.2 440.0 L1049.2 469.0 L1029.0 474.1 M1054.3 440.0 L1054.3 468.3 M1061.8 440.0 L1061.8 465.2 M1066.1 440.0 L1066.1 464.7 L1090.9 457.7 M1136.3 440.0 L1136.3 446.3 L1113.6 451.9 M1141.4 440.0 L1141.4 445.0 M1000.0 480.4 L1012.6 477.9 M685.5 566.0 L685.5 581.7 L723.0 619.0 M715.6 475.9 L715.6 491.1 M721.9 473.9 L721.9 489.0 M729.5 472.1 L729.5 487.3 M735.8 470.4 L735.8 485.5 M676.5 446.1 L694.2 441.6 L696.7 444.6 L679.5 449.4 L676.5 446.1 M680.3 451.9 L680.3 463.3 M691.7 448.7 L691.7 460.8"/>
<path stroke="#a6dd6a" stroke-width="1.2" d="M352.5 356.1 L352.5 480.1 M354.0 357.7 L354.0 480.1 M353.4 470.0 L353.4 568.4 M355.4 470.0 L355.4 533.1 M640.7 283.3 L640.7 390.1 M638.6 306.0 L638.6 341.4 M641.2 380.0 L641.2 493.6 M995.8 190.9 L995.8 340.1 M997.6 192.9 L997.6 340.1 M840.1 233.3 L840.1 340.1 M838.1 330.0 L838.1 446.1 M995.8 330.0 L995.8 370.4 M997.6 330.0 L997.6 370.4"/>
<path stroke="#e89090" d="M637.6 345.1 L637.6 390.1"/>
<path stroke="#e89090" d="M671.5 332.5 L711.8 322.4"/>
<path stroke="#e89090" d="M637.6 380.0 L637.6 570.1"/>
<path stroke="#e89090" d="M657.6 446.1 L657.6 506.2"/>
<path stroke="#e89090" d="M638.6 521.4 L671.5 512.5"/>
<path stroke="#7fe0ee" d="M646.2 476.4 L780.0 439.3"/>
<path stroke="#7fe0ee" d="M603.3 489.0 L641.2 479.7"/>
<path stroke="#7fe0ee" d="M742.1 439.3 L752.2 448.2 L780.0 441.8"/>
<path stroke="#7fe0ee" d="M780.0 424.7 L838.1 410.3"/>
<path stroke="#d86a6a" d="M635.6 540.0 L635.6 595.3"/>
<path stroke="#7fe0ee" d="M639.8 593.9 L652.6 590.7"/>
<path stroke="#fff" stroke-width="3.2" d="M955.9 462.3 L969.3 477.9"/>
<path stroke="#fff" stroke-width="3" d="M696.7 531.5 L706.3 541.6"/>
<path stroke="#e8e8e8" stroke-width="2.6" d="M713.9 474.2 L738.1 467.6"/>
<path stroke="#7fe0ee" d="M661.4 473.9 L780.0 443.1"/>
<path fill="#fff" stroke="none" d="M335.9 340.4 L347.4 337.4 L347.4 344.6 L335.9 347.6Z M337.7 385.9 L349.2 382.8 L349.2 390.0 L337.7 393.1Z M419.2 364.9 L430.7 361.9 L430.7 369.1 L419.2 372.1Z M467.2 353.1 L478.7 350.0 L478.7 357.2 L467.2 360.3Z M505.0 341.4 L516.5 338.4 L516.5 345.6 L505.0 348.6Z M551.7 329.6 L563.2 326.5 L563.2 333.7 L551.7 336.8Z M417.9 412.1 L429.4 409.1 L429.4 416.3 L417.9 419.3Z M432.6 432.3 L444.1 429.3 L444.1 436.5 L432.6 439.5Z M394.0 441.2 L405.5 438.1 L405.5 445.3 L394.0 448.4Z M468.4 398.2 L479.9 395.2 L479.9 402.4 L468.4 405.4Z M480.5 418.4 L492.0 415.4 L492.0 422.6 L480.5 425.6Z M505.8 388.4 L517.3 385.3 L517.3 392.5 L505.8 395.6Z M518.4 396.0 L529.9 392.9 L529.9 400.1 L518.4 403.2Z M505.8 435.6 L517.3 432.5 L517.3 439.7 L505.8 442.8Z M518.9 441.9 L530.4 438.8 L530.4 446.0 L518.9 449.1Z M468.4 445.7 L479.9 442.6 L479.9 449.8 L468.4 452.9Z M481.0 464.6 L492.5 461.6 L492.5 468.8 L481.0 471.8Z M417.9 459.6 L429.4 456.5 L429.4 463.7 L417.9 466.8Z M337.2 433.1 L348.7 430.0 L348.7 437.2 L337.2 440.3Z M334.6 477.3 L346.1 474.2 L346.1 481.4 L334.6 484.5Z M323.8 395.9 L329.3 400.8 L329.3 408.8 L323.8 403.9Z M324.5 445.1 L330.0 450.0 L330.0 458.0 L324.5 453.1Z M336.3 479.3 L347.8 476.2 L347.8 483.4 L336.3 486.5Z M395.6 488.1 L407.1 485.1 L407.1 492.3 L395.6 495.3Z M418.3 505.8 L429.8 502.7 L429.8 509.9 L418.3 513.0Z M433.5 479.3 L445.0 476.2 L445.0 483.4 L433.5 486.5Z M466.3 491.9 L477.8 488.8 L477.8 496.0 L466.3 499.1Z M506.7 481.8 L518.2 478.7 L518.2 485.9 L506.7 489.0Z M335.0 534.1 L346.5 531.0 L346.5 538.2 L335.0 541.3Z M394.3 534.8 L405.8 531.8 L405.8 539.0 L394.3 542.0Z M432.2 525.5 L443.7 522.4 L443.7 529.6 L432.2 532.7Z M480.2 512.1 L491.7 509.0 L491.7 516.2 L480.2 519.3Z M506.7 534.8 L518.2 531.8 L518.2 539.0 L506.7 542.0Z M465.0 548.2 L476.5 545.1 L476.5 552.3 L465.0 555.4Z M419.6 560.1 L431.1 557.0 L431.1 564.2 L419.6 567.3Z M480.2 557.5 L491.7 554.5 L491.7 561.7 L480.2 564.7Z M432.2 571.4 L443.7 568.4 L443.7 575.6 L432.2 578.6Z M394.3 581.0 L405.8 578.0 L405.8 585.2 L394.3 588.2Z M481.4 613.1 L492.9 610.0 L492.9 617.2 L481.4 620.3Z M395.6 635.8 L407.1 632.7 L407.1 639.9 L395.6 643.0Z M432.2 626.5 L443.7 623.4 L443.7 630.6 L432.2 633.7Z M324.1 488.8 L329.6 493.7 L329.6 501.7 L324.1 496.8Z M324.1 536.7 L329.6 541.7 L329.6 549.7 L324.1 544.7Z M553.4 330.5 L564.9 327.4 L564.9 334.6 L553.4 337.7Z M553.4 375.9 L564.9 372.8 L564.9 380.0 L553.4 383.1Z M621.5 312.8 L633.0 309.7 L633.0 316.9 L621.5 320.0Z M621.5 359.5 L633.0 356.4 L633.0 363.6 L621.5 366.7Z M640.5 258.6 L654.4 254.9 L654.4 262.5 L640.5 266.2Z M608.9 384.7 L620.4 381.7 L620.4 388.9 L608.9 391.9Z M738.3 232.9 L763.6 226.2 L763.6 232.7 L738.3 239.5Z M743.9 278.2 L764.6 272.7 L764.6 279.3 L743.9 284.8Z M738.3 325.0 L763.6 318.3 L763.6 324.9 L738.3 331.6Z M738.3 371.7 L763.6 365.0 L763.6 371.6 L738.3 378.3Z M677.8 294.0 L695.4 289.3 L695.4 295.3 L677.8 300.0Z M677.8 340.7 L695.4 336.0 L695.4 342.0 L677.8 346.7Z M520.6 394.3 L532.1 391.3 L532.1 398.5 L520.6 401.5Z M554.6 380.5 L566.1 377.4 L566.1 384.6 L554.6 387.7Z M567.3 394.3 L578.8 391.3 L578.8 398.5 L567.3 401.5Z M554.6 422.9 L566.1 419.8 L566.1 427.0 L554.6 430.1Z M567.3 443.1 L578.8 440.0 L578.8 447.2 L567.3 450.3Z M520.6 441.0 L532.1 438.0 L532.1 445.2 L520.6 448.2Z M553.4 468.8 L564.9 465.7 L564.9 472.9 L553.4 476.0Z M567.3 488.5 L578.8 485.4 L578.8 492.6 L567.3 495.7Z M520.6 489.0 L532.1 485.9 L532.1 493.1 L520.6 496.2Z M608.9 385.0 L620.4 381.9 L620.4 389.1 L608.9 392.2Z M620.3 404.4 L631.8 401.4 L631.8 408.6 L620.3 411.6Z M608.9 429.7 L620.4 426.6 L620.4 433.8 L608.9 436.9Z M620.3 451.1 L631.8 448.1 L631.8 455.3 L620.3 458.3Z M608.9 477.6 L620.4 474.6 L620.4 481.8 L608.9 484.8Z M552.8 523.9 L568.0 519.8 L568.0 528.9 L552.8 533.0Z M567.3 534.4 L578.8 531.4 L578.8 538.6 L567.3 541.6Z M520.6 534.4 L532.1 531.4 L532.1 538.6 L520.6 541.6Z M608.9 524.3 L620.4 521.3 L620.4 528.5 L608.9 531.5Z M618.4 505.0 L633.6 500.9 L633.6 510.0 L618.4 514.0Z M655.6 510.5 L667.1 507.4 L667.1 514.6 L655.6 517.7Z M675.2 486.4 L692.9 481.6 L692.9 490.7 L675.2 495.4Z M677.8 432.8 L692.9 428.7 L692.9 435.8 L677.8 439.8Z M677.8 386.1 L692.9 382.0 L692.9 389.1 L677.8 393.1Z M640.5 403.2 L652.0 400.1 L652.0 407.3 L640.5 410.4Z M643.0 451.1 L654.5 448.1 L654.5 455.3 L643.0 458.3Z M682.1 555.9 L693.6 552.8 L693.6 560.0 L682.1 563.1Z M654.3 564.7 L665.8 561.7 L665.8 568.9 L654.3 571.9Z M771.7 550.8 L783.2 547.8 L783.2 555.0 L771.7 558.0Z M716.7 451.8 L722.2 456.7 L722.2 464.7 L716.7 459.8Z M716.7 497.2 L722.2 502.2 L722.2 510.2 L716.7 505.2Z M696.5 528.8 L702.0 533.7 L702.0 541.7 L696.5 536.8Z M954.7 222.4 L966.2 219.3 L966.2 226.5 L954.7 229.6Z M1016.6 205.5 L1028.1 202.4 L1028.1 209.6 L1016.6 212.7Z M1014.1 252.7 L1025.6 249.6 L1025.6 256.8 L1014.1 259.9Z M1031.7 271.6 L1043.2 268.6 L1043.2 275.8 L1031.7 278.8Z M1015.3 299.4 L1026.8 296.3 L1026.8 303.5 L1015.3 306.6Z M1031.7 318.3 L1043.2 315.3 L1043.2 322.5 L1031.7 325.5Z M954.7 315.8 L966.2 312.7 L966.2 319.9 L954.7 323.0Z M915.6 317.1 L927.1 314.0 L927.1 321.2 L915.6 324.3Z M878.4 329.4 L898.6 324.0 L898.6 329.1 L878.4 334.4Z M910.5 221.8 L916.0 226.7 L916.0 234.7 L910.5 229.8Z M910.5 269.7 L916.0 274.7 L916.0 282.7 L910.5 277.7Z M910.5 316.4 L916.0 321.4 L916.0 329.4 L910.5 324.4Z M957.7 266.0 L963.2 270.9 L963.2 278.9 L957.7 274.0Z M984.2 288.7 L989.7 293.6 L989.7 301.6 L984.2 296.7Z M964.0 317.7 L969.5 322.6 L969.5 330.6 L964.0 325.7Z M1060.6 194.4 L1072.1 191.3 L1072.1 198.5 L1060.6 201.6Z M1015.3 206.0 L1026.8 202.9 L1026.8 210.1 L1015.3 213.2Z M954.9 222.3 L966.4 219.2 L966.4 226.4 L954.9 229.5Z M1015.3 252.5 L1026.8 249.4 L1026.8 256.6 L1015.3 259.7Z M1061.1 240.9 L1072.6 237.8 L1072.6 245.0 L1061.1 248.1Z M1074.6 259.5 L1086.1 256.4 L1086.1 263.6 L1074.6 266.7Z M1032.7 271.1 L1044.2 268.0 L1044.2 275.2 L1032.7 278.3Z M1115.2 249.0 L1126.7 245.9 L1126.7 253.1 L1115.2 256.2Z M1116.4 295.5 L1127.9 292.4 L1127.9 299.6 L1116.4 302.7Z M1015.3 299.0 L1026.8 295.9 L1026.8 303.1 L1015.3 306.2Z M1061.1 287.3 L1072.6 284.3 L1072.6 291.5 L1061.1 294.5Z M1074.6 305.9 L1086.1 302.9 L1086.1 310.1 L1074.6 313.1Z M1032.7 317.5 L1044.2 314.5 L1044.2 321.7 L1032.7 324.7Z M954.9 315.2 L966.4 312.1 L966.4 319.3 L954.9 322.4Z M958.6 265.5 L964.1 270.4 L964.1 278.4 L958.6 273.5Z M984.6 288.7 L990.1 293.7 L990.1 301.7 L984.6 296.7Z M788.2 353.1 L802.1 349.4 L802.1 354.9 L788.2 358.6Z M819.1 343.1 L834.3 339.1 L834.3 344.6 L819.1 348.7Z M821.0 389.7 L834.9 386.0 L834.9 391.5 L821.0 395.2Z M787.6 398.3 L800.2 395.0 L800.2 400.5 L787.6 403.9Z M913.1 363.3 L924.6 360.2 L924.6 367.4 L913.1 370.5Z M881.0 375.3 L898.6 370.6 L898.6 375.6 L881.0 380.3Z M879.1 420.7 L893.0 417.0 L893.0 423.6 L879.1 427.3Z M913.2 411.9 L927.0 408.2 L927.0 413.7 L913.2 417.4Z M874.7 434.2 L894.9 428.8 L894.9 437.9 L874.7 443.3Z M944.1 417.0 L971.8 409.6 L971.8 419.7 L944.1 427.1Z M821.0 436.4 L834.9 432.7 L834.9 438.2 L821.0 441.9Z M787.6 446.3 L800.2 442.9 L800.2 448.5 L787.6 451.8Z M1012.8 345.6 L1024.3 342.5 L1024.3 349.7 L1012.8 352.8Z M1011.0 400.5 L1028.6 395.8 L1028.6 405.9 L1011.0 410.6Z M1031.7 411.2 L1043.2 408.2 L1043.2 415.4 L1031.7 418.4Z M992.0 475.5 L1009.7 470.8 L1009.7 479.9 L992.0 484.6Z M1031.7 466.8 L1043.2 463.7 L1043.2 470.9 L1031.7 474.0Z M913.8 510.9 L941.6 503.5 L941.6 510.1 L913.8 517.5Z M1030.5 364.5 L1042.0 361.5 L1042.0 368.7 L1030.5 371.7Z M959.0 358.9 L964.5 363.8 L964.5 371.8 L959.0 366.9Z M984.2 334.9 L989.7 339.8 L989.7 347.8 L984.2 342.9Z M1035.7 317.1 L1047.2 314.1 L1047.2 321.3 L1035.7 324.3Z M1074.1 307.0 L1085.6 303.9 L1085.6 311.1 L1074.1 314.2Z M1060.5 334.0 L1072.0 331.0 L1072.0 338.2 L1060.5 341.2Z M1016.5 345.3 L1028.0 342.3 L1028.0 349.5 L1016.5 352.5Z M1119.2 341.9 L1130.7 338.9 L1130.7 346.1 L1119.2 349.1Z M1075.2 353.2 L1086.7 350.2 L1086.7 357.4 L1075.2 360.4Z M1033.4 364.5 L1044.9 361.4 L1044.9 368.6 L1033.4 371.7Z M1058.4 389.2 L1071.9 385.5 L1071.9 393.7 L1058.4 397.3Z M1074.2 400.0 L1087.7 396.4 L1087.7 403.1 L1074.2 406.8Z M1117.1 388.3 L1132.9 384.1 L1132.9 392.2 L1117.1 396.5Z M1033.4 410.8 L1044.9 407.7 L1044.9 414.9 L1033.4 418.0Z M1016.5 399.5 L1028.0 396.4 L1028.0 403.6 L1016.5 406.7Z M1116.5 442.2 L1133.4 437.7 L1133.4 446.7 L1116.5 451.2Z M1070.8 453.8 L1086.6 449.6 L1086.6 457.7 L1070.8 461.9Z M1035.7 463.8 L1047.2 460.8 L1047.2 468.0 L1035.7 471.0Z M465.0 548.0 L477.8 544.6 L477.8 552.9 L465.0 556.3Z M478.9 557.3 L491.7 553.9 L491.7 562.2 L478.9 565.6Z M439.4 568.6 L449.9 565.8 L449.9 574.2 L439.4 576.9Z M480.7 612.0 L494.6 608.3 L494.6 616.7 L480.7 620.4Z M438.8 624.5 L450.5 621.4 L450.5 629.8 L438.8 632.9Z M516.7 602.0 L537.6 596.5 L537.6 605.8 L516.7 611.3Z M567.8 588.8 L581.7 585.1 L581.7 593.4 L567.8 597.2Z M606.7 578.5 L621.8 574.5 L621.8 582.8 L606.7 586.9Z M650.9 566.9 L666.0 562.8 L666.0 571.2 L650.9 575.2Z M686.3 557.4 L700.2 553.7 L700.2 562.1 L686.3 565.8Z M780.6 548.2 L799.6 543.2 L799.6 548.7 L780.6 553.8Z M916.3 511.6 L939.0 505.5 L939.0 511.1 L916.3 517.2Z M1032.8 464.7 L1048.0 460.7 L1048.0 469.8 L1032.8 473.8Z M1072.6 454.1 L1089.0 449.7 L1089.0 458.8 L1072.6 463.1Z M997.5 473.7 L1010.1 470.4 L1010.1 479.5 L997.5 482.8Z M1117.4 442.9 L1135.0 438.1 L1135.0 447.2 L1117.4 452.0Z M680.3 445.7 L690.4 443.0 L690.4 446.6 L680.3 449.3Z M686.1 444.5 L691.1 443.2 L691.1 445.7 L686.1 447.1Z"/>
<path fill="#7dd322" stroke="#8fdc35" stroke-width="2" stroke-linejoin="round" d="M361.6 360.4 L371.7 357.1 L371.7 381.7 L361.6 384.9Z M361.6 407.1 L371.7 403.8 L371.7 428.4 L361.6 431.6Z M361.6 453.8 L371.7 450.5 L371.7 475.1 L361.6 478.3Z M362.0 452.6 L371.3 449.5 L371.3 473.5 L362.0 476.6Z M362.0 500.5 L371.3 497.5 L371.3 520.2 L362.0 523.3Z M362.0 555.3 L371.3 552.3 L371.3 575.8 L362.0 578.8Z M591.7 299.8 L600.3 296.9 L600.3 319.4 L591.7 322.2Z M591.7 345.9 L600.3 343.1 L600.3 365.3 L591.7 368.1Z M591.7 391.9 L600.3 389.1 L600.3 410.7 L591.7 413.6Z M591.7 391.4 L600.3 388.6 L600.3 411.5 L591.7 414.3Z M591.7 437.6 L600.3 434.8 L600.3 458.2 L591.7 461.0Z M590.4 495.2 L600.3 492.1 L600.3 514.7 L590.4 517.8Z M845.4 232.2 L854.2 229.3 L854.2 250.9 L845.4 253.8Z M845.4 277.6 L854.2 274.7 L854.2 297.1 L845.4 300.0Z M845.4 324.3 L854.2 321.4 L854.2 344.3 L845.4 347.2Z M977.4 196.2 L986.0 193.4 L986.0 216.3 L977.4 219.2Z M977.4 242.7 L986.0 239.9 L986.0 261.8 L977.4 264.6Z M977.4 289.6 L986.0 286.8 L986.0 309.0 L977.4 311.8Z M977.4 336.1 L986.0 333.3 L986.0 355.7 L977.4 358.5Z M846.1 326.3 L854.7 323.4 L854.7 345.1 L846.1 347.9Z M846.1 371.2 L854.7 368.4 L854.7 391.8 L846.1 394.6Z M843.6 426.9 L852.7 423.9 L852.7 446.7 L843.6 449.7Z M977.4 336.9 L986.0 334.0 L986.0 356.5 L977.4 359.3Z M979.2 392.0 L988.0 389.1 L988.0 411.4 L979.2 414.3Z"/>
<path fill="#5ea61a" stroke="none" d="M360.6 360.4 L362.8 359.8 L362.8 385.3 L360.6 385.9Z M360.6 407.1 L362.8 406.5 L362.8 432.0 L360.6 432.6Z M360.6 453.8 L362.8 453.2 L362.8 478.7 L360.6 479.3Z M361.0 452.6 L363.2 452.0 L363.2 477.0 L361.0 477.6Z M361.0 500.5 L363.2 499.9 L363.2 523.7 L361.0 524.3Z M361.0 555.3 L363.2 554.7 L363.2 579.2 L361.0 579.8Z M590.7 299.8 L592.9 299.2 L592.9 322.6 L590.7 323.2Z M590.7 345.9 L592.9 345.3 L592.9 368.5 L590.7 369.1Z M590.7 391.9 L592.9 391.3 L592.9 414.0 L590.7 414.6Z M590.7 391.4 L592.9 390.8 L592.9 414.7 L590.7 415.3Z M590.7 437.6 L592.9 437.0 L592.9 461.4 L590.7 462.0Z M589.4 495.2 L591.6 494.6 L591.6 518.2 L589.4 518.8Z M844.4 232.2 L846.6 231.6 L846.6 254.2 L844.4 254.8Z M844.4 277.6 L846.6 277.0 L846.6 300.4 L844.4 301.0Z M844.4 324.3 L846.6 323.7 L846.6 347.6 L844.4 348.2Z M976.4 196.2 L978.6 195.6 L978.6 219.6 L976.4 220.2Z M976.4 242.7 L978.6 242.1 L978.6 265.0 L976.4 265.6Z M976.4 289.6 L978.6 289.0 L978.6 312.2 L976.4 312.8Z M976.4 336.1 L978.6 335.5 L978.6 358.9 L976.4 359.5Z M845.1 326.3 L847.3 325.7 L847.3 348.3 L845.1 348.9Z M845.1 371.2 L847.3 370.6 L847.3 395.0 L845.1 395.6Z M842.6 426.9 L844.8 426.3 L844.8 450.1 L842.6 450.7Z M976.4 336.9 L978.6 336.3 L978.6 359.7 L976.4 360.3Z M978.2 392.0 L980.4 391.4 L980.4 414.7 L978.2 415.3Z"/>
<path stroke="#d8f07c" stroke-width="2" d="M353.4 533.1 L364.8 543.7 L520.0 501.6 M492.2 513.4 L505.4 520.5 L505.4 587.4 L487.2 593.2 L520.0 621.5 M520.0 503.7 L780.0 434.3 M580.6 509.2 L638.6 494.9 M595.7 522.6 L638.6 511.3 M999.6 198.0 L1003.4 197.5 L1002.6 193.4 L999.1 190.4 L995.8 190.9 M780.0 433.0 L1021.1 369.1 L1032.4 379.2 L1023.6 384.3 L1023.6 448.6 L1032.4 448.6 M1020.0 368.8 L1032.4 379.0 L1024.1 383.5 L1024.1 449.0 L1042.6 444.5 L1071.9 470.0 M505.1 540.0 L505.1 586.5 L487.6 592.3 L556.2 659.7 M1024.0 440.0 L1024.0 448.8 L1045.4 444.5 L1113.6 511.2 M367.0 368.5 L1003.5 196.5 M354.7 356.3 L366.0 368.3"/>
<path stroke="#e8ffd0" stroke-width=".8" d="M844.1 427.2 L852.2 436.0 L844.1 438.5 L852.2 425.4 M844.1 438.5 L852.2 447.4 L844.1 448.6 L852.2 436.5 M979.7 392.3 L987.5 401.2 L979.7 403.2 L987.5 390.6 M979.7 403.2 L987.5 412.0 L979.7 413.3 L987.5 401.7"/>
<path fill="#b9b9b9" stroke="#fff" stroke-width="1" d="M631.0 282.5 L678.0 270.0 L687.0 278.1 L640.0 290.6Z"/>
<path fill="#8e8e8e" stroke="#eee" stroke-width=".8" d="M640.0 290.6 L687.0 278.1 L687.0 281.1 L640.0 293.6Z"/>
<ellipse cx="639.0" cy="286.4" rx="4" ry="2.3" fill="#f4f4f4" stroke="#666" stroke-width=".7" transform="rotate(-14 639.0 286.4)"/>
<ellipse cx="648.2" cy="283.9" rx="4" ry="2.3" fill="#f4f4f4" stroke="#666" stroke-width=".7" transform="rotate(-14 648.2 283.9)"/>
<ellipse cx="657.4" cy="281.5" rx="4" ry="2.3" fill="#f4f4f4" stroke="#666" stroke-width=".7" transform="rotate(-14 657.4 281.5)"/>
<ellipse cx="666.6" cy="277.0" rx="4" ry="2.3" fill="#f4f4f4" stroke="#666" stroke-width=".7" transform="rotate(-14 666.6 277.0)"/>
<ellipse cx="675.8" cy="274.5" rx="4" ry="2.3" fill="#f4f4f4" stroke="#666" stroke-width=".7" transform="rotate(-14 675.8 274.5)"/>
<path stroke="#fff" stroke-width="1" d="M655.0 275.1 v-7 l4.5 -1.2 v7"/>
<path stroke="#fff" stroke-width="1" d="M661.5 273.4 v-7 l4.5 -1.2 v7"/>
<path stroke="#fff" stroke-width="1" d="M668.0 271.6 v-7 l4.5 -1.2 v7"/>
<path stroke="#fff" stroke-width="1" d="M674.5 269.9 v-7 l4.5 -1.2 v7"/>
<path fill="#d8d8d8" stroke="#fff" stroke-width="1" d="M694.0 262.0 l7 -2 l5 4 v5 l-6 3 l-6 -4z"/>
<ellipse cx="699.0" cy="265.0" rx="3.4" ry="2" fill="#fff" stroke="#777" stroke-width=".6"/>
<path stroke="#fff" stroke-width="1" d="M696.0 270.0 v8 M702.0 269.0 v9 M692.0 280.0 l12 -3"/>
<ellipse cx="737.5" cy="283.0" rx="4.2" ry="2.2" fill="#ddd" stroke="#fff" stroke-width="1"/>
<path stroke="#fff" stroke-width="1.1" d="M640 302.0 L702 285.5 M660 309.0 L700 298.3 M643 268.0 L664 262.4"/>
<path stroke="#fff" stroke-width="1" d="M640.0 296.0 l12 -3.2 M652.0 300.0 l14 -3.7"/>
<path fill="#b9b9b9" stroke="#fff" stroke-width="1" d="M631.0 329.1 L678.0 316.6 L687.0 324.7 L640.0 337.2Z"/>
<path fill="#8e8e8e" stroke="#eee" stroke-width=".8" d="M640.0 337.2 L687.0 324.7 L687.0 327.7 L640.0 340.2Z"/>
<ellipse cx="639.0" cy="333.0" rx="4" ry="2.3" fill="#f4f4f4" stroke="#666" stroke-width=".7" transform="rotate(-14 639.0 333.0)"/>
<ellipse cx="648.2" cy="330.5" rx="4" ry="2.3" fill="#f4f4f4" stroke="#666" stroke-width=".7" transform="rotate(-14 648.2 330.5)"/>
<ellipse cx="657.4" cy="328.1" rx="4" ry="2.3" fill="#f4f4f4" stroke="#666" stroke-width=".7" transform="rotate(-14 657.4 328.1)"/>
<ellipse cx="666.6" cy="323.6" rx="4" ry="2.3" fill="#f4f4f4" stroke="#666" stroke-width=".7" transform="rotate(-14 666.6 323.6)"/>
<ellipse cx="675.8" cy="321.1" rx="4" ry="2.3" fill="#f4f4f4" stroke="#666" stroke-width=".7" transform="rotate(-14 675.8 321.1)"/>
<path stroke="#fff" stroke-width="1" d="M655.0 321.7 v-7 l4.5 -1.2 v7"/>
<path stroke="#fff" stroke-width="1" d="M661.5 320.0 v-7 l4.5 -1.2 v7"/>
<path stroke="#fff" stroke-width="1" d="M668.0 318.2 v-7 l4.5 -1.2 v7"/>
<path stroke="#fff" stroke-width="1" d="M674.5 316.5 v-7 l4.5 -1.2 v7"/>
<path fill="#d8d8d8" stroke="#fff" stroke-width="1" d="M694.0 308.6 l7 -2 l5 4 v5 l-6 3 l-6 -4z"/>
<ellipse cx="699.0" cy="311.6" rx="3.4" ry="2" fill="#fff" stroke="#777" stroke-width=".6"/>
<path stroke="#fff" stroke-width="1" d="M696.0 316.6 v8 M702.0 315.6 v9 M692.0 326.6 l12 -3"/>
<ellipse cx="737.5" cy="329.6" rx="4.2" ry="2.2" fill="#ddd" stroke="#fff" stroke-width="1"/>
<path stroke="#fff" stroke-width="1.1" d="M640 348.6 L702 332.1 M660 355.6 L700 344.9 M643 314.6 L664 309.0"/>
<path stroke="#fff" stroke-width="1" d="M640.0 342.6 l12 -3.2 M652.0 346.6 l14 -3.7"/>
<path fill="#b9b9b9" stroke="#fff" stroke-width="1" d="M631.0 375.7 L678.0 363.2 L687.0 371.3 L640.0 383.8Z"/>
<path fill="#8e8e8e" stroke="#eee" stroke-width=".8" d="M640.0 383.8 L687.0 371.3 L687.0 374.3 L640.0 386.8Z"/>
<ellipse cx="639.0" cy="379.6" rx="4" ry="2.3" fill="#f4f4f4" stroke="#666" stroke-width=".7" transform="rotate(-14 639.0 379.6)"/>
<ellipse cx="648.2" cy="377.1" rx="4" ry="2.3" fill="#f4f4f4" stroke="#666" stroke-width=".7" transform="rotate(-14 648.2 377.1)"/>
<ellipse cx="657.4" cy="374.7" rx="4" ry="2.3" fill="#f4f4f4" stroke="#666" stroke-width=".7" transform="rotate(-14 657.4 374.7)"/>
<ellipse cx="666.6" cy="370.2" rx="4" ry="2.3" fill="#f4f4f4" stroke="#666" stroke-width=".7" transform="rotate(-14 666.6 370.2)"/>
<ellipse cx="675.8" cy="367.7" rx="4" ry="2.3" fill="#f4f4f4" stroke="#666" stroke-width=".7" transform="rotate(-14 675.8 367.7)"/>
<path stroke="#fff" stroke-width="1" d="M655.0 368.3 v-7 l4.5 -1.2 v7"/>
<path stroke="#fff" stroke-width="1" d="M661.5 366.6 v-7 l4.5 -1.2 v7"/>
<path stroke="#fff" stroke-width="1" d="M668.0 364.8 v-7 l4.5 -1.2 v7"/>
<path stroke="#fff" stroke-width="1" d="M674.5 363.1 v-7 l4.5 -1.2 v7"/>
<path fill="#d8d8d8" stroke="#fff" stroke-width="1" d="M694.0 355.2 l7 -2 l5 4 v5 l-6 3 l-6 -4z"/>
<ellipse cx="699.0" cy="358.2" rx="3.4" ry="2" fill="#fff" stroke="#777" stroke-width=".6"/>
<path stroke="#fff" stroke-width="1" d="M696.0 363.2 v8 M702.0 362.2 v9 M692.0 373.2 l12 -3"/>
<ellipse cx="737.5" cy="376.2" rx="4.2" ry="2.2" fill="#ddd" stroke="#fff" stroke-width="1"/>
<path stroke="#fff" stroke-width="1.1" d="M640 395.2 L702 378.7 M660 402.2 L700 391.5 M643 361.2 L664 355.6"/>
<path stroke="#fff" stroke-width="1" d="M640.0 389.2 l12 -3.2 M652.0 393.2 l14 -3.7"/>
<path fill="#b9b9b9" stroke="#fff" stroke-width="1" d="M631.0 422.3 L678.0 409.8 L687.0 417.9 L640.0 430.4Z"/>
<path fill="#8e8e8e" stroke="#eee" stroke-width=".8" d="M640.0 430.4 L687.0 417.9 L687.0 420.9 L640.0 433.4Z"/>
<ellipse cx="639.0" cy="426.2" rx="4" ry="2.3" fill="#f4f4f4" stroke="#666" stroke-width=".7" transform="rotate(-14 639.0 426.2)"/>
<ellipse cx="648.2" cy="423.7" rx="4" ry="2.3" fill="#f4f4f4" stroke="#666" stroke-width=".7" transform="rotate(-14 648.2 423.7)"/>
<ellipse cx="657.4" cy="421.3" rx="4" ry="2.3" fill="#f4f4f4" stroke="#666" stroke-width=".7" transform="rotate(-14 657.4 421.3)"/>
<ellipse cx="666.6" cy="416.8" rx="4" ry="2.3" fill="#f4f4f4" stroke="#666" stroke-width=".7" transform="rotate(-14 666.6 416.8)"/>
<ellipse cx="675.8" cy="414.3" rx="4" ry="2.3" fill="#f4f4f4" stroke="#666" stroke-width=".7" transform="rotate(-14 675.8 414.3)"/>
<path stroke="#fff" stroke-width="1" d="M655.0 414.9 v-7 l4.5 -1.2 v7"/>
<path stroke="#fff" stroke-width="1" d="M661.5 413.2 v-7 l4.5 -1.2 v7"/>
<path stroke="#fff" stroke-width="1" d="M668.0 411.4 v-7 l4.5 -1.2 v7"/>
<path stroke="#fff" stroke-width="1" d="M674.5 409.7 v-7 l4.5 -1.2 v7"/>
<path fill="#d8d8d8" stroke="#fff" stroke-width="1" d="M694.0 401.8 l7 -2 l5 4 v5 l-6 3 l-6 -4z"/>
<ellipse cx="699.0" cy="404.8" rx="3.4" ry="2" fill="#fff" stroke="#777" stroke-width=".6"/>
<path stroke="#fff" stroke-width="1" d="M696.0 409.8 v8 M702.0 408.8 v9 M692.0 419.8 l12 -3"/>
<ellipse cx="737.5" cy="422.8" rx="4.2" ry="2.2" fill="#ddd" stroke="#fff" stroke-width="1"/>
<path stroke="#fff" stroke-width="1.1" d="M640 441.8 L702 425.3 M660 448.8 L700 438.1 M643 407.8 L664 402.2"/>
<path stroke="#fff" stroke-width="1" d="M640.0 435.8 l12 -3.2 M652.0 439.8 l14 -3.7"/>
<path fill="#b9b9b9" stroke="#fff" stroke-width="1" d="M631.0 477.9 L669.0 467.8 L678.0 475.9 L640.0 486.0Z"/>
<path fill="#8e8e8e" stroke="#eee" stroke-width=".8" d="M640.0 486.0 L678.0 475.9 L678.0 478.9 L640.0 489.0Z"/>
<ellipse cx="639.0" cy="481.8" rx="4" ry="2.3" fill="#f4f4f4" stroke="#666" stroke-width=".7" transform="rotate(-14 639.0 481.8)"/>
<ellipse cx="648.2" cy="479.3" rx="4" ry="2.3" fill="#f4f4f4" stroke="#666" stroke-width=".7" transform="rotate(-14 648.2 479.3)"/>
<ellipse cx="657.4" cy="476.9" rx="4" ry="2.3" fill="#f4f4f4" stroke="#666" stroke-width=".7" transform="rotate(-14 657.4 476.9)"/>
<ellipse cx="666.6" cy="472.4" rx="4" ry="2.3" fill="#f4f4f4" stroke="#666" stroke-width=".7" transform="rotate(-14 666.6 472.4)"/>
<path stroke="#fff" stroke-width="1" d="M655.0 470.5 v-7 l4.5 -1.2 v7"/>
<path stroke="#fff" stroke-width="1" d="M661.5 468.8 v-7 l4.5 -1.2 v7"/>
<path stroke="#fff" stroke-width="1" d="M668.0 467.0 v-7 l4.5 -1.2 v7"/>
<path stroke="#fff" stroke-width="1" d="M674.5 465.3 v-7 l4.5 -1.2 v7"/>
<path fill="#d8d8d8" stroke="#fff" stroke-width="1" d="M694.0 457.4 l7 -2 l5 4 v5 l-6 3 l-6 -4z"/>
<ellipse cx="699.0" cy="460.4" rx="3.4" ry="2" fill="#fff" stroke="#777" stroke-width=".6"/>
<path stroke="#fff" stroke-width="1" d="M696.0 465.4 v8 M702.0 464.4 v9 M692.0 475.4 l12 -3"/>
<ellipse cx="737.5" cy="478.4" rx="4.2" ry="2.2" fill="#ddd" stroke="#fff" stroke-width="1"/>
<path stroke="#fff" stroke-width="1.1" d="M640 497.4 L702 480.9 M660 504.4 L700 493.7 M643 463.4 L664 457.8"/>
<path stroke="#fff" stroke-width="1" d="M640.0 491.4 l12 -3.2 M652.0 495.4 l14 -3.7"/>
</g></svg>
<svg style="left:0;top:0" width="1269" height="753" viewBox="0 0 1269 753">
<!-- viewcube ring -->
<ellipse cx="1183" cy="264.5" rx="45.5" ry="26.5" fill="none" stroke="#484848" stroke-width="7"/>
<!-- cube -->
<path d="M1153 218.500 L1187 210.600 L1207 225 L1170.300 235.200 Z" fill="#747474"/>
<path d="M1153 218.500 L1170.300 235.200 L1171 270.400 L1155 252.400 Z" fill="#646464"/>
<path d="M1170.300 235.200 L1207 225 L1205.700 257.200 L1171 270.400 Z" fill="#6c6c6c"/>
<g font-family="'Liberation Serif','Noto Serif CJK SC','Noto Sans CJK SC',serif" fill="#484848" text-anchor="middle">
<text x="1181" y="227" font-size="13" transform="rotate(-14 1181 223)">上</text>
<text x="1189" y="255" font-size="17" transform="rotate(-16 1189 249)">前</text>
<text x="1162" y="250" font-size="12" transform="rotate(46 1162 246)">左</text>
<text x="1133" y="277" font-size="15" fill="#7c7c7c" transform="rotate(28 1133 273)">西</text>
<text x="1206" y="291" font-size="15" fill="#7c7c7c" transform="rotate(-18 1206 287)">南</text>
<text x="1219" y="251" font-size="12" fill="#7c7c7c" transform="rotate(-50 1219 247)">东</text>
</g>
<!-- view window controls -->
<rect x="1208" y="154" width="10" height="3.500" fill="#ddd"/>
<path d="M1224.500 152 h6 v6 h-6 z M1226.500 152 v-2 h6 v6 h-2" fill="none" stroke="#ddd" stroke-width="1.600"/>
<path d="M1240 150.500 l8 8 M1248 150.500 l-8 8" stroke="#eee" stroke-width="2.400"/>
<!-- nav bar -->
<rect x="1222.500" y="305.500" width="30" height="100" rx="4" fill="#4d4d4d" stroke="#5e5e5e"/>
<path d="M1245 308.500 l4 4 M1249 308.500 l-4 4" stroke="#ccc" stroke-width="1"/>
<circle cx="1237" cy="331.500" r="8" fill="#8a8a8a" stroke="#a8a8a8" stroke-width="1.500"/><circle cx="1237" cy="331.500" r="4" fill="#5a5a5a" stroke="#bbb" stroke-width="1"/>
<path d="M1224 355.500 h27" stroke="#3a3a3a"/>
<rect x="1230.500" y="363.500" width="9" height="9" fill="#5d8a4a" stroke="#6fa058"/><circle cx="1241" cy="373" r="2.300" fill="#bbb"/>
<path d="M1235 346 h4 M1235 387 h4" stroke="#5e5e5e"/>
<path d="M1243 397 h5 M1243 399 h5 M1244 401 l1.500 1.500 l1.500 -1.500" stroke="#ddd" stroke-width="1" fill="none"/>
</svg>
<div id="props" class="abs">
<div class="abs" style="left:3px;top:1px;width:202px;height:20px;background:#c4d4e4"><span style="position:absolute;left:1px;top:1px;font-size:11px;line-height:18px;letter-spacing:-0.3px;color:#111">属性</span><svg style="right:5px;top:6px" width="8" height="8" viewBox="0 0 8 8"><path d="M1 1 L7 7 M7 1 L1 7" stroke="#111" stroke-width="1.6"/></svg></div>
<div class="abs" style="left:6px;top:23px;width:196px;height:66px;border:1px solid #b4b4b4;background:linear-gradient(#fff,#f2f2f2)"></div>
<div class="abs" style="left:10px;top:27px;width:59px;height:59px;border:1px solid #d8d8d8;background:linear-gradient(#fdfdfd,#f0f0f0)"></div>
<svg style="left:24px;top:42px" width="32" height="30" viewBox="0 0 32 30"><path d="M4 14 L16 3 L28 12 L28 22 L14 28 L4 22 Z" fill="#f2f2f2" stroke="#555" stroke-width="1.4"/><path d="M2.5 14 L15 2 L29.5 12.5 L17 17 Z" fill="#e4e4e4" stroke="#555" stroke-width="1.4"/><path d="M17 17 V27" stroke="#777"/><path d="M7.5 17 l4 2 v7 l-4 -2.200 z" fill="#444"/></svg>
<div class="abs" style="left:73px;top:49px;font-size:11px;line-height:14px;letter-spacing:-0.3px">三维视图</div><div class="dar" style="left:193px;top:55px;border-width:3.500px;border-top-width:4px"></div>
<div class="abs" style="left:8px;top:90px;width:120px;height:21px;border:1px solid #8a8a8a;border-radius:3px;background:linear-gradient(#fafafa,#e4e4e4);overflow:hidden"><span style="position:absolute;left:2px;top:2px;font-size:11px;line-height:16px;letter-spacing:-0.3px;white-space:nowrap;width:100px;overflow:hidden;display:block">三维视图: {三维 - 张洋</span><div class="dar" style="right:5px;top:8px;border-width:3.500px;border-top-width:4px"></div></div>
<svg style="left:133px;top:92px" width="16" height="16" viewBox="0 0 16 16" fill="#fff" stroke="#556" stroke-width="1"><rect x="1" y="1" width="5" height="5"/><rect x="1" y="9" width="5" height="5"/><rect x="9" y="1" width="5" height="5"/><rect x="8.500" y="7.500" width="6.500" height="8" fill="#eef4fc" stroke="#345"/><path d="M10 10 h3.500 M10 12.500 h3.500" stroke="#36c"/></svg>
<div class="abs" style="left:152px;top:93px;font-size:11px;line-height:14px;letter-spacing:-0.3px">编辑类型</div>
<div class="abs" style="left:0;top:112px;width:208px;height:411px;overflow:hidden">
<div class="ph" style="top:0px;height:18px">图形<svg class="chev" viewBox="0 0 7 9" style="right:7px;top:4px" width="7" height="9"><path d="M0.500 4 L3.500 1 L6.500 4 M0.500 8 L3.500 5 L6.500 8" fill="none" stroke="#111" stroke-width="1.300"/></svg></div>
<div class="pr " style="top:18px;height:17px"><b>视图比例</b><i>&nbsp;&nbsp;1 : 100</i></div>
<div class="pr g" style="top:35px;height:18px"><b>比例值 1:</b><i>100</i></div>
<div class="pr " style="top:53px;height:18px"><b>详细程度</b><i>精细</i></div>
<div class="pr " style="top:71px;height:17px"><b>零件可见性</b><i>显示原状态</i></div>
<div class="pr" style="top:88px;height:18px"><b>可见性/图形替换</b><div class="pbtn">编辑...</div></div>
<div class="pr" style="top:106px;height:17px"><b>图形显示选项</b><div class="pbtn">编辑...</div></div>
<div class="pr " style="top:123px;height:18px"><b>规程</b><i>建筑</i></div>
<div class="pr " style="top:141px;height:18px"><b>显示隐藏线</b><i>按规程</i></div>
<div class="pr " style="top:159px;height:17px"><b>默认分析显示...</b><i>无</i></div>
<div class="pr " style="top:176px;height:18px"><b>日光路径</b><div class="cb"></div></div>
<div class="ph" style="top:194px;height:18px">标识数据<svg class="chev" viewBox="0 0 7 9" style="right:7px;top:4px" width="7" height="9"><path d="M0.500 4 L3.500 1 L6.500 4 M0.500 8 L3.500 5 L6.500 8" fill="none" stroke="#111" stroke-width="1.300"/></svg></div>
<div class="pr" style="top:212px;height:17px"><b>视图样板</b><div class="pbtn">&lt;无&gt;</div></div>
<div class="pr " style="top:229px;height:18px"><b>视图名称</b><i>{三维 - 张洋}</i></div>
<div class="pr g" style="top:247px;height:17px"><b>相关性</b><i>不相关</i></div>
<div class="pr " style="top:264px;height:18px"><b>图纸上的标题</b><i></i></div>
<div class="pr g" style="top:282px;height:18px"><b>工作集</b><i>视图“三维视...</i></div>
<div class="pr g" style="top:300px;height:17px"><b>编辑者</b><i>张洋</i></div>
<div class="ph" style="top:317px;height:18px">范围<svg class="chev" viewBox="0 0 7 9" style="right:7px;top:4px" width="7" height="9"><path d="M0.500 4 L3.500 1 L6.500 4 M0.500 8 L3.500 5 L6.500 8" fill="none" stroke="#111" stroke-width="1.300"/></svg></div>
<div class="pr " style="top:335px;height:18px"><b>裁剪视图</b><div class="cb"></div></div>
<div class="pr " style="top:353px;height:17px"><b>裁剪区域可见</b><div class="cb"></div></div>
<div class="pr " style="top:370px;height:18px"><b>注释裁剪</b><div class="cb"></div></div>
<div class="pr g" style="top:388px;height:17px"><b>远剪裁激活</b><div class="cb"></div></div>
<div class="pr " style="top:405px;height:18px"><b>剖面框</b><div class="cb"></div></div>
<div class="abs" style="left:96px;top:16px;width:0;height:400px;border-left:1px dotted #9a9a9a"></div>
<div class="abs" style="left:185px;top:16px;width:0;height:400px;border-left:1px dotted #9a9a9a"></div>
</div>
<div class="abs" style="left:187px;top:113px;width:15px;height:410px;background:#f0f0f0"></div>
<div class="abs" style="left:191px;top:119px;border:3.500px solid transparent;border-bottom:4px solid #444;border-top:0"></div>
<div class="abs" style="left:188px;top:129px;width:11px;height:244px;border:1px solid #9a9a9a;border-radius:2px;background:linear-gradient(90deg,#f4f4f4,#d6d6d6)"></div>
<div class="abs" style="left:190px;top:248px;width:7px;height:7px;border-top:1px solid #666;border-bottom:1px solid #666"><div style="position:absolute;left:0;top:2px;width:7px;height:1px;background:#666"></div></div>
<div class="dar" style="left:191px;top:515px;border-width:3.500px;border-top-width:4px;border-top-color:#444"></div>
<div class="abs" style="left:9px;top:527px;font-size:11px;line-height:14px;color:#1a5fd0;text-decoration:underline;letter-spacing:-0.3px">属性帮助</div>
<div class="abs" style="left:136px;top:526px;width:64px;height:18px;border:1px solid #b0b0b0;border-radius:3px;background:#f4f4f4;color:#9a9a9a;text-align:center;font-size:11px;line-height:16px;letter-spacing:-0.3px">应用</div>
<div class="abs" style="left:3px;top:547px;width:203px;height:1px;background:#8a8a8a"></div>
<div class="abs" style="left:5px;top:547px;width:34px;height:20px;background:#f4f4f4;border:1px solid #8a8a8a;border-top:0;border-radius:0 0 3px 3px;font-size:11px;line-height:18px;text-align:center;letter-spacing:-0.3px;color:#111">属性</div>
<div class="abs" style="left:39px;top:548px;width:166px;height:18px;background:#f4f4f4;border:1px solid #8a8a8a;border-radius:0 0 3px 3px;font-size:11px;line-height:16px;padding-left:5px;letter-spacing:-0.3px;white-space:nowrap;color:#111;overflow:hidden">项目浏览器 - 技师学院机电培训...</div>
</div>
<!-- vscroll -->
<div class="abs" style="left:1257px;top:146px;border:3.500px solid transparent;border-bottom:4px solid #444;border-top:0"></div>
<div class="abs" style="left:1257px;top:705px;border:3.500px solid transparent;border-top:4px solid #444;border-bottom:0"></div>
<div class="abs" style="left:1254px;top:421px;width:13px;height:14px;border:1px solid #9a9a9a;border-radius:2px;background:linear-gradient(90deg,#f8f8f8,#dcdcdc)"></div>
<!-- view control bar -->
<div class="abs" style="left:0;top:716px;width:330px;height:17px;background:#f4f4f4"></div>
<div class="abs" style="left:17px;top:717px;font-size:11px;line-height:15px;color:#222;white-space:nowrap;word-spacing:2px;font-family:'Liberation Serif','Liberation Sans',serif">1 : 100</div>
<svg style="left:68px;top:716px" width="262" height="17" viewBox="68 716 262 17" fill="none" stroke-width="1.200">
<rect x="70" y="718" width="13" height="10" fill="#999" stroke="#444" stroke-dasharray="1 1"/>
<path d="M89 722 l4 -3 h9 v6 l-4 3 h-9 z M89 722 h9 l4 -3 M98 722 v6" fill="#cfe6fa" stroke="#2a6cb8"/>
<circle cx="112" cy="722" r="3.500" fill="#ffe070" stroke="#e09010"/><path d="M113 723 l5 5 M118 723 l-5 5" stroke="#e01818" stroke-width="1.600"/>
<circle cx="130" cy="722" r="3.500" fill="#e8f0fc" stroke="#2a6cb8"/><path d="M126 728 h6" stroke="#2a6cb8"/><path d="M131 724 l5 5 M136 724 l-5 5" stroke="#e01818" stroke-width="1.600"/>
<path d="M143 719 l8 1 v4 l-5 3 z" fill="#f0f0f0" stroke="#667"/><circle cx="153" cy="724" r="2.800" fill="#fff" stroke="#2a6cb8"/><path d="M153 727 v2" stroke="#2a6cb8"/>
<path d="M161 724 h3 v-5 h6" stroke="#2a6cb8" stroke-width="1.500"/><path d="M165 721 l5 6 M170 721 l-5 6" stroke="#e01818" stroke-width="1.600"/>
<path d="M179 724 h3 v-5 h6 v4" stroke="#2a6cb8" stroke-width="1.500"/><circle cx="189" cy="723" r="2.800" fill="#fff" stroke="#2a6cb8"/><path d="M189 726 v2" stroke="#2a6cb8"/>
<path d="M198 728 v-7 l4 -3 l4 3 v1" stroke="#445"/><rect x="203" y="723" width="5" height="5" fill="#8cc8a0" stroke="#2a7a4a"/>
<circle cx="218" cy="724" r="2.800" stroke="#334"/><circle cx="226" cy="724" r="2.800" stroke="#334"/><path d="M212 720 l3.500 2.500 M221 724 h2" stroke="#334"/>
<circle cx="241" cy="722" r="2.800" fill="#fff" stroke="#2a6cb8"/><path d="M241 725 v2" stroke="#2a6cb8"/>
<circle cx="258" cy="721" r="3" stroke="#2a7a3a" stroke-width="1.500"/><circle cx="255" cy="725" r="3" stroke="#2a6cb8" stroke-width="1.500"/><path d="M258 723 l5 5 M263 723 l-5 5" stroke="#e01818" stroke-width="1.600"/>
<rect x="273" y="719" width="10" height="8" stroke="#333" stroke-dasharray="2 1"/><circle cx="283" cy="725" r="2.500" fill="#f4f4f4" stroke="#667"/>
<path d="M291 727 v-5 l3 -3 h8 v5 l-3 3 z M291 722 h8 v5" stroke="#556"/><path d="M294 721 v6 M297 721 v6" stroke="#e01818"/><circle cx="301" cy="724" r="2.500" fill="#fff" stroke="#2a6cb8"/>
<path d="M309 727 v-5 h9 v5 z M311 722 v-2 h9 v5 h-2 M313 720 v-2 h9 v5 h-2" fill="#f4f4f4" stroke="#445"/>
</svg>
<div class="abs" style="left:331px;top:721px;border:3px solid transparent;border-right:3.500px solid #444;border-left:0"></div>
<div class="abs" style="left:1243px;top:721px;border:3px solid transparent;border-left:3.500px solid #444;border-right:0"></div>
<div class="abs" style="left:782px;top:717px;width:15px;height:14px;border:1px solid #9a9a9a;border-radius:2px;background:linear-gradient(#f8f8f8,#dcdcdc)"></div>
<svg style="left:1255px;top:720px" width="12" height="12" viewBox="0 0 12 12" fill="#b0b0b0"><rect x="8" y="2" width="2" height="2"/><rect x="8" y="5" width="2" height="2"/><rect x="8" y="8" width="2" height="2"/><rect x="5" y="5" width="2" height="2"/><rect x="5" y="8" width="2" height="2"/><rect x="2" y="8" width="2" height="2"/></svg>
<!-- status bar -->
<div class="abs" style="left:0;top:733px;width:1269px;height:20px;background:linear-gradient(#e6e6e6,#d6d6d6);border-top:1px solid #c4c4c4"></div>
<div class="abs" style="left:-4px;top:735px;width:489px;height:18px;overflow:hidden;white-space:nowrap;font-size:11px;line-height:17px;color:#111;letter-spacing:-0.2px" id="sttxt">单击可进行选择; 按 <em>Tab</em> 键并单击可选择其他项目; 按 <em>Ctrl</em> 键并单击可将新项目添加到选择集; 按 <em>Shift</em> 键并</div>
<svg style="left:488px;top:735px" width="20" height="17" viewBox="0 0 20 17"><path d="M3 6 l3 -2 l3 2 v7 l-3 2 l-3 -2 z" fill="#9cd0f4" stroke="#2a6cb8"/><path d="M7 3 l3 -2 l3 2 v4 l-3 2 l-3 -2 z" fill="#58b848" stroke="#2c6e22"/><path d="M12 6 a3 3 0 1 0 4 0 v3 h-4 z M12.800 10 h2.400 v6 h-2.400 z" fill="#eee" stroke="#445" stroke-width=".9"/></svg>
<div class="abs" style="left:508px;top:735px;width:186px;height:18px;background:#fff;border:1px solid #c8c8c8"><span style="position:absolute;left:4px;top:0;font-size:11px;line-height:16px;letter-spacing:-0.300px;color:#111">设备</span><div class="dar" style="right:4px;top:7px;border-top-color:#222"></div></div>
<svg style="left:698px;top:735px" width="20" height="17" viewBox="0 0 20 17" fill="none" stroke="#333"><path d="M5 3 h8 l-3 5 h-5 z M5 10 l-2 5 h8 l-1 -5" fill="#f4f4f4"/></svg>
<div class="abs" style="left:718px;top:737px;font-size:11px;line-height:14px;color:#222">:0</div>
<svg style="left:744px;top:735px" width="40" height="17" viewBox="0 0 40 17" fill="none"><rect x="1.500" y="2.500" width="14" height="12" fill="#fff" stroke="#333"/><path d="M3 5 h11 M4 8 h3 M8 8 h6 M4 11 h3 M8 11 h6" stroke="#333"/><rect x="24" y="2" width="14" height="12" fill="#a8a8a8"/><path d="M27 11 l6 -5 v3 h3" stroke="#ddd" stroke-width="1.500"/></svg>
<div class="abs" style="left:786px;top:735px;width:140px;height:18px;background:#fff;border:1px solid #c8c8c8"><span style="position:absolute;left:6px;top:0;font-size:11px;line-height:16px;letter-spacing:-0.300px;color:#9a9a9a">主模型</span><div class="dar" style="right:6px;top:7px;border-top-color:#aaa"></div></div>
<div class="abs" style="left:1000px;top:737px;width:12px;height:12px;background:#fff;border:1px solid #555"></div>
<div class="abs" style="left:1014px;top:736px;font-size:11px;line-height:15px;letter-spacing:-0.300px;color:#111;white-space:nowrap">仅可编辑项</div>
<svg style="left:1072px;top:734px" width="145" height="19" viewBox="1072 734 145 19" fill="none" stroke-width="1.200">
<path d="M1076 741 c0 -3 3 -3 5 -2 c2 -1 5 -1 5 2 c0 2 -3 2 -5 1 c-2 1 -5 1 -5 -1 z" fill="#f8c840" stroke="#b88010"/><path d="M1082 741 v8 l2 -2 l2 3 l1 -1 l-2 -3 h3 z" fill="#fff" stroke="#222" stroke-width=".9"/>
<path d="M1097 744 l6 -5 h9 l-6 5 z M1097 747 h9 l6 -5" stroke="#2a6cb8"/><path d="M1106 741 v8 l2 -2 l2 3 l1 -1 l-2 -3 h3 z" fill="#fff" stroke="#222" stroke-width=".9"/>
<path d="M1122 739 h8 v4 h-8 z M1126 743 v6" stroke="#c07020" fill="#f8d8a0"/><path d="M1129 737 l5 5 M1134 737 l-5 5" stroke="#e01818" stroke-width="1.600"/><path d="M1130 743 v7 l2 -2 l1.500 2.500" stroke="#222" stroke-width=".9"/>
<path d="M1146 740 l4 -2 v9 l-4 2 z" stroke="#2a6cb8" fill="#cfe6fa"/><path d="M1152 737 l5 5 M1157 737 l-5 5" stroke="#e01818" stroke-width="1.600"/><path d="M1152 743 v7 l2 -2 l1.500 2.500" stroke="#222" stroke-width=".9"/>
<path d="M1168 740 h7 M1171.500 736.500 v7" stroke="#222"/><path d="M1174 741 v8 l2 -2 l2 3 l1 -1 l-2 -3 h3 z" fill="#fff" stroke="#222" stroke-width=".9"/>
<path d="M1187 738 h13 l-5 6 v6 l-3 -2 v-4 z" fill="#f0f0f0" stroke="#445"/>
</svg>
<div class="abs" style="left:1201px;top:739px;font-size:11px;line-height:14px;color:#222">:0</div>
</body></html>
